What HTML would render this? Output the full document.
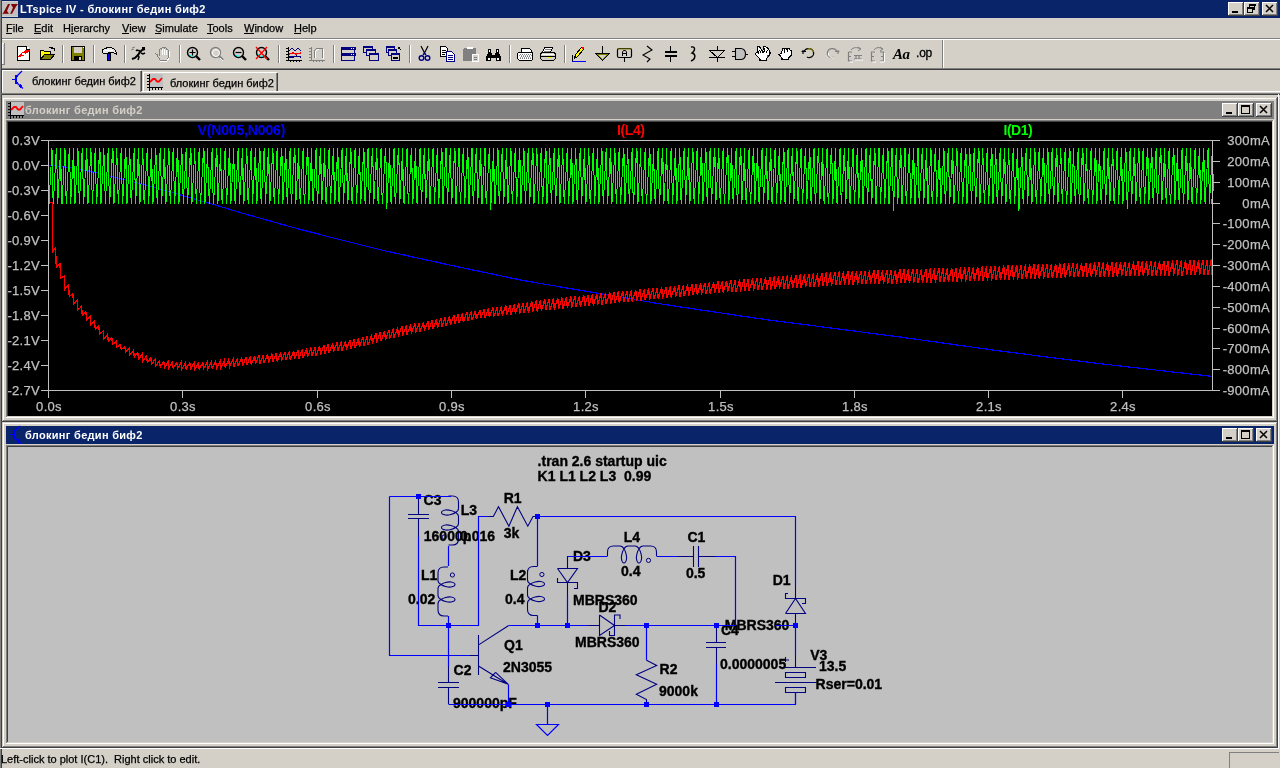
<!DOCTYPE html><html><head><meta charset="utf-8"><style>html,body{margin:0;padding:0;background:#d4d0c8;overflow:hidden}svg{display:block;will-change:transform}</style></head><body><svg style="white-space:pre" width="1280" height="768" viewBox="0 0 1280 768" font-family="Liberation Sans"><rect x="0" y="0" width="1280" height="768" fill="#d4d0c8"/>
<rect x="0" y="0" width="1" height="768" fill="#808080"/>
<rect x="1" y="0" width="1" height="768" fill="#404040"/>
<rect x="2" y="0" width="1278" height="18" fill="#0a246a"/>
<g transform="translate(2,1)"><rect width="16" height="16" fill="#c0c0c0"/><rect x="0" y="0" width="16" height="1" fill="#d4d0c8"/><rect x="0" y="15" width="16" height="1" fill="#d4d0c8"/><path d="M6,3 H8 L5,10 L7,12.8 H0 L1.5,11.5 Z" fill="#800000"/><path d="M9,3 H16 L14,5.5 L10,12.8 H8 L9.5,10 L11,6.5 L9.5,4.5 Z" fill="#800000"/></g>
<text x="20" y="13" font-family="Liberation Sans" font-size="11" fill="#fff" font-weight="bold" text-anchor="start" letter-spacing="0.33" >LTspice IV - блокинг бедин биф2</text>
<rect x="1228" y="2" width="16" height="14" fill="#404040"/>
<rect x="1228" y="2" width="15" height="13" fill="#ffffff"/>
<rect x="1229" y="3" width="14" height="12" fill="#808080"/>
<rect x="1229" y="3" width="13" height="11" fill="#d4d0c8"/>
<rect x="1244" y="2" width="16" height="14" fill="#404040"/>
<rect x="1244" y="2" width="15" height="13" fill="#ffffff"/>
<rect x="1245" y="3" width="14" height="12" fill="#808080"/>
<rect x="1245" y="3" width="13" height="11" fill="#d4d0c8"/>
<rect x="1262" y="2" width="16" height="14" fill="#404040"/>
<rect x="1262" y="2" width="15" height="13" fill="#ffffff"/>
<rect x="1263" y="3" width="14" height="12" fill="#808080"/>
<rect x="1263" y="3" width="13" height="11" fill="#d4d0c8"/>
<rect x="1232" y="11" width="6" height="2" fill="#000"/>
<rect x="1249.5" y="4.5" width="5" height="5" fill="none" stroke="#000"/>
<rect x="1249" y="4" width="7" height="2" fill="#000"/>
<rect x="1247" y="7" width="6" height="6" fill="#d4d0c8"/>
<rect x="1247.5" y="7.5" width="5" height="5" fill="none" stroke="#000"/>
<rect x="1247" y="7" width="7" height="2" fill="#000"/>
<path d="M1266,5 L1273,12 M1273,5 L1266,12" stroke="#000" stroke-width="1.5" fill="none"/>
<text x="6" y="32" font-family="Liberation Sans" font-size="11" fill="#000" text-anchor="start" stroke="#000" stroke-width="0.25">File</text>
<text x="34" y="32" font-family="Liberation Sans" font-size="11" fill="#000" text-anchor="start" stroke="#000" stroke-width="0.25">Edit</text>
<text x="63" y="32" font-family="Liberation Sans" font-size="11" fill="#000" text-anchor="start" stroke="#000" stroke-width="0.25">Hierarchy</text>
<text x="122" y="32" font-family="Liberation Sans" font-size="11" fill="#000" text-anchor="start" stroke="#000" stroke-width="0.25">View</text>
<text x="155" y="32" font-family="Liberation Sans" font-size="11" fill="#000" text-anchor="start" stroke="#000" stroke-width="0.25">Simulate</text>
<text x="207" y="32" font-family="Liberation Sans" font-size="11" fill="#000" text-anchor="start" stroke="#000" stroke-width="0.25">Tools</text>
<text x="244" y="32" font-family="Liberation Sans" font-size="11" fill="#000" text-anchor="start" stroke="#000" stroke-width="0.25">Window</text>
<text x="294" y="32" font-family="Liberation Sans" font-size="11" fill="#000" text-anchor="start" stroke="#000" stroke-width="0.25">Help</text>
<rect x="6" y="33" width="6" height="1" fill="#000"/>
<rect x="34" y="33" width="7" height="1" fill="#000"/>
<rect x="71" y="33" width="3" height="1" fill="#000"/>
<rect x="122" y="33" width="7" height="1" fill="#000"/>
<rect x="155" y="33" width="6" height="1" fill="#000"/>
<rect x="207" y="33" width="6" height="1" fill="#000"/>
<rect x="244" y="33" width="10" height="1" fill="#000"/>
<rect x="294" y="33" width="7" height="1" fill="#000"/>
<rect x="2" y="38" width="1278" height="1" fill="#808080"/>
<rect x="2" y="39" width="1278" height="1" fill="#ffffff"/>
<rect x="2" y="68" width="1278" height="1" fill="#808080"/>
<rect x="2" y="69" width="1278" height="1" fill="#404040"/>
<rect x="2" y="43" width="1" height="22" fill="#ffffff"/>
<rect x="2" y="43" width="3" height="1" fill="#ffffff"/>
<rect x="4" y="43" width="1" height="22" fill="#808080"/>
<rect x="2" y="64" width="3" height="1" fill="#808080"/>
<g transform="translate(16,46)" shape-rendering="crispEdges"><path d="M1.5,0.5 H10.5 L13.5,3.5 V14.5 H1.5 Z" fill="#fff" stroke="#000"/><path d="M10.5,0.5 V3.5 H13.5" fill="none" stroke="#000"/><rect x="11" y="1" width="2" height="2" fill="#fff"/><path d="M2,11 L5,7 L7,6 L9,4 L14,4 L11,7 L9,8 L7,10 Z" fill="#ff0000"/><rect x="6" y="7" width="3" height="2" fill="#fff"/></g>
<g transform="translate(39,46)" shape-rendering="crispEdges"><path d="M1.5,4.5 H4.5 L5.5,5.5 H11.5 V8.5 H5.5 L1.5,13.5 Z" fill="#ffff00" stroke="#000"/><path d="M1.5,13.5 L5.5,8.5 H15.5 L11.5,13.5 Z" fill="#808000" stroke="#000"/><path d="M9.5,2.5 C10.5,0.5 13,0.5 14,2.5" fill="none" stroke="#000"/><path d="M12,2 H15 V5" fill="none" stroke="#000"/></g>
<g transform="translate(70,46)" shape-rendering="crispEdges"><rect x="1.5" y="0.5" width="13" height="14" fill="#808000" stroke="#000"/><rect x="4" y="1" width="8" height="6" fill="#d4d0c8"/><rect x="4" y="10" width="8" height="4" fill="#000"/><rect x="9" y="11" width="2" height="3" fill="#d4d0c8"/><rect x="13" y="1" width="1" height="1" fill="#fff"/></g>
<g transform="translate(101,46)" shape-rendering="crispEdges"><path d="M1.5,3.5 L4.5,2.5 L6.5,1.5 H10.5 L13.5,3.5 L15.5,6.5 V8.5 L12.5,6.5 H8.5 L5.5,7.5 H2.5 L1.5,6.5 Z" fill="#e8e8e8" stroke="#000"/><rect x="4" y="4" width="8" height="1" fill="#fff"/><rect x="6.5" y="7.5" width="3" height="7" fill="#000080" stroke="#000"/><rect x="7" y="8" width="2" height="6" fill="#0000ff"/></g>
<g transform="translate(131,46)"><path d="M1,13 L4,12 L7,9 L9,6 L11,4 L14,3" stroke="#000" stroke-width="2" fill="none"/><path d="M7,9 L8,11 L7,14 M10,7 L12,8 L14,7 M9,5 L6,4 L5,5" stroke="#000" stroke-width="1.5" fill="none"/><rect x="11" y="1" width="3" height="3" fill="#000"/><path d="M1,2 L4,1 M0,4 L3,3" stroke="#808080" fill="none"/></g>
<g transform="translate(155,46)" shape-rendering="crispEdges"><path d="M3.5,9.5 L1.5,8.5 L3.5,11.5 L5.5,14.5 H11.5 L13.5,11.5 V4.5 L12.5,3.5 L11.5,4.5 V2.5 L10.5,1.5 L9.5,2.5 V1.5 H7.5 L6.5,2.5 V3.5 L5.5,2.5 L4.5,3.5 V9.5" fill="none" stroke="#808080"/><path d="M7,3 V9 M9,3 V9 M11,4 V9" stroke="#fff" fill="none"/><path d="M5,15 H12 L14,12 M14,5 V11" stroke="#fff" fill="none"/></g>
<g transform="translate(186,46)"><circle cx="6.5" cy="6.5" r="5" fill="none" stroke="#000" stroke-width="1.4"/><path d="M3,8 A4,4 0 0 0 8,10" fill="none" stroke="#00ffff" stroke-width="1"/><path d="M10,10 L14,14" stroke="#000" stroke-width="2.4"/><path d="M3.5,6.5 H9.5 M6.5,3.5 V9.5" stroke="#000" stroke-width="1.2"/></g>
<g transform="translate(209,46)"><circle cx="6.5" cy="6.5" r="5" fill="none" stroke="#808080" stroke-width="1.4"/><circle cx="7" cy="7" r="3.5" fill="none" stroke="#fff" stroke-width="1"/><path d="M10,10 L14,14" stroke="#808080" stroke-width="2.4"/><path d="M11,12 L14,15" stroke="#fff"/></g>
<g transform="translate(232,46)"><circle cx="6.5" cy="6.5" r="5" fill="none" stroke="#000" stroke-width="1.4"/><path d="M3,8 A4,4 0 0 0 8,10" fill="none" stroke="#00ffff" stroke-width="1"/><path d="M10,10 L14,14" stroke="#000" stroke-width="2.4"/><path d="M3.5,6.5 H9.5" stroke="#000" stroke-width="1.2"/></g>
<g transform="translate(255,46)"><circle cx="6.5" cy="6.5" r="5" fill="none" stroke="#000" stroke-width="1.4"/><path d="M3,8 A4,4 0 0 0 8,10" fill="none" stroke="#00ffff" stroke-width="1"/><path d="M10,10 L14,14" stroke="#000" stroke-width="2.4"/><path d="M1,1 L12,13 M12,1 L1,13" stroke="#ff0000" stroke-width="1.3"/></g>
<g transform="translate(286,46)" shape-rendering="crispEdges"><path d="M2.5,1 V14.5 H16" stroke="#000" fill="none"/><path d="M0,2.5H2M0,5.5H2M0,8.5H2M0,11.5H2M0,14.5H2M4.5,15V16M7.5,15V16M10.5,15V16M13.5,15V16" stroke="#000" fill="none"/><path d="M3,5 L6,2 L9,5 L12,2 L15,5" stroke="#000080" fill="none" stroke-width="1"/><path d="M3,8 L7,7 L10,8 L15,7" stroke="#ff0000" fill="none" stroke-width="1.3"/><path d="M3,11 L8,11 L10,10 L15,11" stroke="#000080" fill="none" stroke-width="1.3"/></g>
<g transform="translate(309,46)" shape-rendering="crispEdges"><path d="M2.5,1 V14.5 H16" stroke="#808080" fill="none"/><path d="M0,2.5H2M0,5.5H2M0,8.5H2M0,11.5H2M0,14.5H2M4.5,15V16M7.5,15V16M10.5,15V16M13.5,15V16" stroke="#808080" fill="none"/><path d="M5,12 V7 C5,4 7,2 10,2 H13 V12" stroke="#808080" fill="none"/><path d="M6,12 V8 C6,5 8,3 10,3 M14,3 V13" stroke="#fff" fill="none"/></g>
<g transform="translate(340,46)" shape-rendering="crispEdges"><rect x="1.5" y="1.5" width="13" height="13" fill="#d4d0c8" stroke="#000080"/><rect x="1" y="1" width="15" height="3" fill="#000080"/><rect x="1" y="7" width="15" height="3" fill="#000080"/><rect x="1.5" y="7.5" width="13" height="7" fill="none" stroke="#000080"/><rect x="11" y="2" width="1" height="1" fill="#fff"/><rect x="13" y="2" width="1" height="1" fill="#fff"/><rect x="11" y="8" width="1" height="1" fill="#fff"/><rect x="13" y="8" width="1" height="1" fill="#fff"/></g>
<g transform="translate(363,46)" shape-rendering="crispEdges"><rect x="0.5" y="0.5" width="9" height="6" fill="#d4d0c8" stroke="#000080"/><rect x="0" y="0" width="10" height="2" fill="#000080"/><rect x="3.5" y="3.5" width="9" height="6" fill="#d4d0c8" stroke="#000080"/><rect x="3" y="3" width="10" height="2" fill="#000080"/><rect x="6.5" y="7.5" width="9" height="7" fill="#d4d0c8" stroke="#000080"/><rect x="6" y="7" width="10" height="2" fill="#000080"/></g>
<g transform="translate(386,46)" shape-rendering="crispEdges"><rect x="0.5" y="0.5" width="8" height="6" fill="#d4d0c8" stroke="#000080"/><rect x="0" y="0" width="9" height="2" fill="#000080"/><rect x="2.5" y="3.5" width="8" height="6" fill="#d4d0c8" stroke="#000080"/><rect x="2" y="3" width="9" height="2" fill="#000080"/><rect x="5.5" y="7.5" width="8" height="7" fill="#d4d0c8" stroke="#000080"/><rect x="5" y="7" width="9" height="2" fill="#000080"/><rect x="7" y="11" width="5" height="2" fill="#000"/><path d="M12,1 L15,4 M12,1 H14 M12,1 V3" stroke="#000" fill="none"/></g>
<g transform="translate(417,46)"><path d="M4,0 L8,8 M11,0 L7,8" stroke="#000" fill="none" stroke-width="1.2"/><circle cx="4.5" cy="12" r="2.3" fill="none" stroke="#000080" stroke-width="1.4"/><circle cx="10.5" cy="12" r="2.3" fill="none" stroke="#000080" stroke-width="1.4"/><path d="M6,9 L7.5,7 L9,9" stroke="#000080" fill="none" stroke-width="1.3"/></g>
<g transform="translate(440,46)" shape-rendering="crispEdges"><path d="M0.5,0.5 H5.5 L7.5,2.5 V10.5 H0.5 Z" fill="#fff" stroke="#000"/><path d="M2,4.5 H6 M2,6.5 H6 M2,8.5 H5" stroke="#000"/><path d="M6.5,5.5 H11.5 L14.5,8.5 V15.5 H6.5 Z" fill="#fff" stroke="#000080"/><path d="M8,9.5 H13 M8,11.5 H13 M8,13.5 H13" stroke="#000080"/></g>
<g transform="translate(463,46)" shape-rendering="crispEdges"><rect x="0" y="2" width="13" height="13" rx="2" fill="#808080"/><rect x="4" y="1" width="6" height="2" fill="#fff"/><path d="M9.5,8.5 H15.5 V15.5 H9.5 Z" fill="#d4d0c8" stroke="#fff"/><path d="M11,11.5 H14 M11,13.5 H14" stroke="#808080"/></g>
<g transform="translate(486,46)" shape-rendering="crispEdges"><path d="M2,3 H5 V7 H6 V9 H9 V7 H10 V3 H13 V7 L15,11 V15 H10 V12 H5 V15 H0 V11 L2,7 Z" fill="#000"/><rect x="2" y="12" width="2" height="2" fill="#fff"/><rect x="11" y="12" width="2" height="2" fill="#fff"/><rect x="3" y="4" width="1" height="2" fill="#fff"/><rect x="11" y="4" width="1" height="2" fill="#fff"/></g>
<g transform="translate(517,46)" shape-rendering="crispEdges"><path d="M4.5,2.5 H12.5 L14.5,4.5 V6.5 H4.5 Z" fill="#fff" stroke="#000"/><path d="M1.5,6.5 H15.5 V13.5 L14.5,14.5 H2.5 L0.5,12.5 V7.5 Z" fill="#fff" stroke="#000"/><path d="M3,8h1M5,8h1M7,8h1M9,8h1M11,8h1M13,8h1M4,10h1M6,10h1M8,10h1M10,10h1M12,10h1M3,12h1M5,12h1M7,12h1M9,12h1M11,12h1M13,12h1" stroke="#808080"/><path d="M2,9h1M4,9h1M6,9h1M8,9h1M10,9h1M12,9h1M14,9h1M3,11h1M5,11h1M7,11h1M9,11h1M11,11h1M13,11h1" stroke="#a0a0a0"/></g>
<g transform="translate(540,46)" shape-rendering="crispEdges"><path d="M4.5,1.5 H12.5 L10.5,6.5 H2.5 Z" fill="#fff" stroke="#000"/><path d="M5,3.5 H11 M4,5 H10" stroke="#808080"/><path d="M1.5,6.5 H14.5 L15.5,8.5 V12.5 L13.5,14.5 H2.5 L0.5,12.5 V8.5 Z" fill="#d4d0c8" stroke="#000"/><path d="M1,10.5 H15" stroke="#000"/><path d="M8,11.5 H11" stroke="#ffff00"/><path d="M2,8 H14" stroke="#fff"/></g>
<g transform="translate(571,46)" shape-rendering="crispEdges"><path d="M3.5,12.5 L4.5,8.5 L10.5,1.5 L12.5,3.5 L6.5,10.5 Z" fill="#ffff00" stroke="#000"/><rect x="11" y="1" width="2" height="2" fill="#ff0000"/><path d="M1,15.5 H15" stroke="#0000ff"/><path d="M1.5,9 V15" stroke="#000"/></g>
<g transform="translate(594,46)" shape-rendering="crispEdges"><path d="M8.5,0 V7" stroke="#000"/><path d="M1.5,7.5 H15.5 L8.5,14.5 Z" fill="#808000" stroke="#000"/><path d="M3.5,8.5 H13.5 L8.5,13 Z" fill="#d4d0c8"/></g>
<g transform="translate(617,46)"><rect x="0.5" y="2.5" width="14" height="9" rx="1.5" fill="#d4d0c8" stroke="#000" stroke-width="1.2"/><path d="M1,3 H14" stroke="#808000"/><path d="M7.5,11 V16" stroke="#000"/><path d="M5.5,10 V6 L6.5,4.5 H8.5 L9.5,6 V10 M5.5,7.5 H9.5" stroke="#000" fill="none"/></g>
<g transform="translate(640,46)"><path d="M7,0 L12,4 L3,9 L10,13 L7,16" stroke="#000" fill="none" stroke-width="1.1"/></g>
<g transform="translate(663,46)" shape-rendering="crispEdges"><path d="M7.5,0 V6 M7.5,9 V16" stroke="#000" stroke-width="1.3"/><rect x="2" y="5" width="12" height="2" fill="#000"/><rect x="2" y="9" width="12" height="2" fill="#000"/></g>
<g transform="translate(689,46)"><path d="M2,1 C6,0 7,4 3,7 C7,8 7,13 2,15" stroke="#000" fill="none" stroke-width="1.4"/></g>
<g transform="translate(709,46)" shape-rendering="crispEdges"><path d="M8.5,0 V16" stroke="#000"/><path d="M0.5,4.5 H15.5 L8.5,11.5 Z" fill="#d4d0c8" stroke="#000"/><path d="M0,11.5 H16" stroke="#000"/></g>
<g transform="translate(732,46)"><path d="M3.5,2.5 H8.5 C12,2.5 13.5,5 13.5,8 C13.5,11 12,13.5 8.5,13.5 H3.5 Z" fill="#c0c0c0" stroke="#000" stroke-width="1.1"/><path d="M0,5.5 H3 M0,10.5 H3 M14,8.5 H16" stroke="#000"/></g>
<g transform="translate(755,46)" shape-rendering="crispEdges"><path d="M0.5,7.5 L2,6.5 L3.5,7 L2,2 L3,0.5 H4.5 L7.5,5.5 L9,0.5 H10.5 L13.5,3 L15,6.5 V8 L11.5,12.5 V14.5 H5 V13 L0.5,8.5 Z" fill="#fff" stroke="#000" stroke-width="1.1"/><path d="M4.5,4 L6,6.5 M10,2.5 L8.5,7 M12.5,4 L11,7" stroke="#000" fill="none"/><rect x="12" y="9" width="1" height="2" fill="#008080"/></g>
<g transform="translate(778,46)" shape-rendering="crispEdges"><path d="M1,8.5 L3,7.5 L4,5 L5,2.5 H7.5 L8.5,3 L9.5,2.5 H11 L12,4 L13.5,4.5 V9 L10.5,12 V13.5 H4 V12 Z" fill="#fff" stroke="#000" stroke-width="1.1"/><path d="M6.5,3 V7 M9.5,3 V6" stroke="#000" fill="none"/></g>
<g transform="translate(801,46)"><path d="M3,6 C4,2 11,1 12.5,6 C13.5,10 9,13 6,11" stroke="#000" fill="none" stroke-width="1.2" /><path d="M7,3 C10,2 12,4 12.5,6" stroke="#808000" fill="none" stroke-width="1.2"/><path d="M0.5,5.5 H5 M2,4 V8" stroke="#000" stroke-width="1.2"/></g>
<g transform="translate(824,46)"><path d="M13,6 C12,2 5,1 3.5,6 C2.5,10 7,13 10,11" stroke="#808080" fill="none" stroke-width="1.2" /><path d="M4.5,7 C4,10 7,12 10,12" stroke="#fff" fill="none"/><path d="M11,5.5 H15.5 M14,4 V8" stroke="#808080" stroke-width="1.2"/></g>
<g transform="translate(847,46)"><path d="M1.5,6 V15 H5 M1.5,10.5 H4 M1.5,6 H5" stroke="#808080" fill="none" stroke-width="1.2"/><path d="M7,9.5 H15 M9,9.5 V13 M12,9.5 V13 M7,13 H15" stroke="#808080" fill="none" stroke-width="1.2"/><path d="M4,4 C6,1 11,1 13,3 M11,1 L14,3 L11,5" stroke="#808080" fill="none"/><path d="M2.5,16 H6 M8,14 H16" stroke="#fff"/></g>
<g transform="translate(870,46)"><path d="M5,6 H1.5 V15 H5 M1.5,10.5 H4" stroke="#808080" fill="none" stroke-width="1.2"/><path d="M10,6 H13.5 V15 H10 M13.5,10.5 H11" stroke="#808080" fill="none" stroke-width="1.2"/><path d="M4,4 C6,1 10,1 12,3 M10,1 L13,3 L10,5" stroke="#808080" fill="none"/><path d="M2.5,16 H6 M10,16 H14 M14.5,7 V16" stroke="#fff"/></g>
<g transform="translate(893,46)"><text x="0" y="13" font-family="Liberation Serif" font-style="italic" font-weight="bold" font-size="15" fill="#000" letter-spacing="-0.5">Aa</text></g>
<g transform="translate(916,46)"><text x="0" y="11" font-family="Liberation Sans" font-size="12" fill="#000" stroke="#000" stroke-width="0.3" letter-spacing="-0.2">.op</text></g>
<rect x="62" y="45" width="1" height="18" fill="#808080"/><rect x="63" y="45" width="1" height="18" fill="#fff"/>
<rect x="93" y="45" width="1" height="18" fill="#808080"/><rect x="94" y="45" width="1" height="18" fill="#fff"/>
<rect x="124" y="45" width="1" height="18" fill="#808080"/><rect x="125" y="45" width="1" height="18" fill="#fff"/>
<rect x="179" y="45" width="1" height="18" fill="#808080"/><rect x="180" y="45" width="1" height="18" fill="#fff"/>
<rect x="278" y="45" width="1" height="18" fill="#808080"/><rect x="279" y="45" width="1" height="18" fill="#fff"/>
<rect x="333" y="45" width="1" height="18" fill="#808080"/><rect x="334" y="45" width="1" height="18" fill="#fff"/>
<rect x="409" y="45" width="1" height="18" fill="#808080"/><rect x="410" y="45" width="1" height="18" fill="#fff"/>
<rect x="509" y="45" width="1" height="18" fill="#808080"/><rect x="510" y="45" width="1" height="18" fill="#fff"/>
<rect x="564" y="45" width="1" height="18" fill="#808080"/><rect x="565" y="45" width="1" height="18" fill="#fff"/>
<rect x="942" y="40" width="1" height="28" fill="#808080"/>
<rect x="943" y="40" width="1" height="28" fill="#ffffff"/>
<rect x="142" y="91" width="1138" height="1" fill="#ffffff"/>
<rect x="2" y="70" width="139" height="1" fill="#ffffff"/>
<rect x="2" y="70" width="1" height="22" fill="#ffffff"/>
<rect x="140" y="71" width="1" height="21" fill="#808080"/>
<rect x="141" y="71" width="1" height="20" fill="#404040"/>
<g transform="translate(6,70)" shape-rendering="crispEdges"><rect x="6" y="9" width="3" height="1" fill="#0000ff"/><rect x="9" y="5" width="2" height="9" fill="#0000ff"/><rect x="11" y="5" width="1" height="2" fill="#0000ff"/><rect x="11" y="12" width="1" height="2" fill="#0000ff"/><path d="M11,6 L16,1" stroke="#0000ff" fill="none" shape-rendering="auto" stroke-width="1.2"/><path d="M11,13 L17,18.5" stroke="#0000ff" fill="none" shape-rendering="auto" stroke-width="1.2"/><rect x="13" y="15" width="3" height="2" fill="#0000ff"/><rect x="14" y="14" width="1" height="4" fill="#0000ff"/></g>
<text x="32" y="84.5" font-family="Liberation Sans" font-size="11" fill="#000" text-anchor="start" stroke="#000" stroke-width="0.25">блокинг бедин биф2</text>
<rect x="143" y="72" width="134" height="1" fill="#ffffff"/>
<rect x="143" y="72" width="1" height="19" fill="#ffffff"/>
<rect x="276" y="73" width="1" height="18" fill="#808080"/>
<rect x="277" y="73" width="1" height="18" fill="#404040"/>
<g transform="translate(147,74)" shape-rendering="crispEdges"><rect x="3" y="0" width="13" height="13" fill="#c0c0c0"/><path d="M2.5,0 V16.5" stroke="#000" fill="none"/><path d="M0,1.5h3M0,4.5h3M0,7.5h3M0,10.5h3M0,13.5h16" stroke="#000" fill="none"/><path d="M5.5,14v2M8.5,14v2M11.5,14v2M14.5,14v2" stroke="#000" fill="none"/><path d="M3,8 L6,5 H8 L10,7.5 H12 L15,4" stroke="#f00" stroke-width="1.8" fill="none" shape-rendering="auto"/></g>
<text x="170" y="86.5" font-family="Liberation Sans" font-size="11" fill="#000" text-anchor="start" stroke="#000" stroke-width="0.25">блокинг бедин биф2</text>
<rect x="0" y="93" width="1280" height="1" fill="#808080"/>
<rect x="1" y="94" width="1279" height="1" fill="#404040"/>
<rect x="1278" y="94" width="1" height="654" fill="#ffffff"/>
<rect x="0" y="748" width="1279" height="1" fill="#ffffff"/>
<text x="1" y="763" font-family="Liberation Sans" font-size="11" fill="#000" text-anchor="start" stroke="#000" stroke-width="0.25">Left-click to plot I(C1). &#160;Right click to edit.</text>
<rect x="1229" y="752" width="50" height="1" fill="#808080"/>
<rect x="1229" y="752" width="1" height="16" fill="#808080"/>
<rect x="2" y="97" width="1276" height="325" fill="#404040"/>
<rect x="2" y="97" width="1275" height="324" fill="#d4d0c8"/>
<rect x="3" y="98" width="1274" height="323" fill="#808080"/>
<rect x="3" y="98" width="1273" height="322" fill="#ffffff"/>
<rect x="4" y="99" width="1272" height="321" fill="#d4d0c8"/>
<rect x="6" y="101" width="1268" height="18" fill="#808080"/>
<g transform="translate(8,102)" shape-rendering="crispEdges"><rect x="3" y="0" width="13" height="13" fill="#c0c0c0"/><path d="M2.5,0 V16.5" stroke="#000" fill="none"/><path d="M0,1.5h3M0,4.5h3M0,7.5h3M0,10.5h3M0,13.5h16" stroke="#000" fill="none"/><path d="M5.5,14v2M8.5,14v2M11.5,14v2M14.5,14v2" stroke="#000" fill="none"/><path d="M3,8 L6,5 H8 L10,7.5 H12 L15,4" stroke="#f00" stroke-width="1.8" fill="none" shape-rendering="auto"/></g>
<text x="25" y="114" font-family="Liberation Sans" font-size="11" fill="#d4d0c8" font-weight="bold" text-anchor="start" letter-spacing="0.3" >блокинг бедин биф2</text>
<rect x="1222" y="103" width="16" height="14" fill="#404040"/>
<rect x="1222" y="103" width="15" height="13" fill="#ffffff"/>
<rect x="1223" y="104" width="14" height="12" fill="#808080"/>
<rect x="1223" y="104" width="13" height="11" fill="#d4d0c8"/>
<rect x="1238" y="103" width="16" height="14" fill="#404040"/>
<rect x="1238" y="103" width="15" height="13" fill="#ffffff"/>
<rect x="1239" y="104" width="14" height="12" fill="#808080"/>
<rect x="1239" y="104" width="13" height="11" fill="#d4d0c8"/>
<rect x="1256" y="103" width="16" height="14" fill="#404040"/>
<rect x="1256" y="103" width="15" height="13" fill="#ffffff"/>
<rect x="1257" y="104" width="14" height="12" fill="#808080"/>
<rect x="1257" y="104" width="13" height="11" fill="#d4d0c8"/>
<rect x="1226" y="112" width="6" height="2" fill="#000"/>
<rect x="1241.5" y="105.5" width="8" height="8" fill="none" stroke="#000"/>
<rect x="1241" y="105" width="9" height="2" fill="#000"/>
<path d="M1260,106 L1267,113 M1267,106 L1260,113" stroke="#000" stroke-width="1.5" fill="none"/>
<rect x="6" y="120" width="1268" height="298" fill="#ffffff"/>
<rect x="6" y="120" width="1267" height="297" fill="#808080"/>
<rect x="7" y="121" width="1266" height="296" fill="#d4d0c8"/>
<rect x="7" y="121" width="1265" height="295" fill="#404040"/>
<rect x="8" y="122" width="1264" height="294" fill="#000"/>
<g shape-rendering="crispEdges">
<path d="M48,165.0 L49,165.2 L50,165.3 L51,165.5 L52,165.6 L53,165.8 L54,165.8 L55,165.9 L56,166.0 L57,166.1 L58,166.3 L59,166.4 L60,166.5 L61,166.7 L62,166.8 L63,166.9 L64,167.0 L65,167.2 L66,167.3 L67,167.4 L68,167.5 L69,167.7 L70,167.8 L71,167.9 L72,168.1 L73,168.2 L74,168.3 L75,168.5 L76,168.6 L77,168.8 L78,169.0 L79,169.1 L80,169.3 L81,169.5 L82,169.7 L83,169.9 L84,170.1 L85,170.3 L86,170.5 L87,170.8 L88,171.0 L89,171.2 L90,171.4 L91,171.6 L92,171.8 L93,172.0 L94,172.2 L95,172.4 L96,172.7 L97,172.9 L98,173.1 L99,173.3 L100,173.6 L101,173.8 L102,174.0 L103,174.3 L104,174.5 L105,174.8 L106,175.0 L107,175.3 L108,175.5 L109,175.8 L110,176.1 L111,176.3 L112,176.6 L113,176.8 L114,177.1 L115,177.3 L116,177.6 L117,177.8 L118,178.1 L119,178.3 L120,178.6 L121,178.9 L122,179.1 L123,179.4 L124,179.6 L125,179.9 L126,180.1 L127,180.4 L128,180.6 L129,180.9 L130,181.2 L131,181.4 L132,181.7 L133,181.9 L134,182.2 L135,182.4 L136,182.7 L137,182.9 L138,183.2 L139,183.4 L140,183.7 L141,184.0 L142,184.2 L143,184.5 L144,184.7 L145,185.0 L146,185.2 L147,185.5 L148,185.8 L149,186.0 L150,186.3 L151,186.6 L152,186.9 L153,187.1 L154,187.4 L155,187.7 L156,188.0 L157,188.3 L158,188.6 L159,188.9 L160,189.1 L161,189.4 L162,189.7 L163,190.0 L164,190.3 L165,190.6 L166,190.9 L167,191.1 L168,191.4 L169,191.7 L170,192.0 L171,192.3 L172,192.6 L173,192.9 L174,193.1 L175,193.4 L176,193.7 L177,194.0 L178,194.3 L179,194.6 L180,194.9 L181,195.1 L182,195.4 L183,195.7 L184,196.0 L185,196.3 L186,196.6 L187,196.9 L188,197.1 L189,197.4 L190,197.7 L191,198.0 L192,198.3 L193,198.6 L194,198.9 L195,199.1 L196,199.4 L197,199.7 L198,200.0 L199,200.3 L200,200.6 L201,200.9 L202,201.1 L203,201.4 L204,201.7 L205,202.0 L206,202.3 L207,202.6 L208,202.9 L209,203.1 L210,203.4 L211,203.7 L212,204.0 L213,204.3 L214,204.6 L215,204.9 L216,205.2 L217,205.5 L218,205.8 L219,206.1 L220,206.4 L221,206.7 L222,207.0 L223,207.3 L224,207.6 L225,207.9 L226,208.3 L227,208.6 L228,208.9 L229,209.2 L230,209.5 L231,209.8 L232,210.1 L233,210.4 L234,210.7 L235,211.0 L236,211.3 L237,211.6 L238,211.9 L239,212.2 L240,212.5 L241,212.8 L242,213.1 L243,213.3 L244,213.6 L245,213.9 L246,214.2 L247,214.5 L248,214.8 L249,215.0 L250,215.3 L251,215.6 L252,215.9 L253,216.2 L254,216.4 L255,216.7 L256,217.0 L257,217.3 L258,217.6 L259,217.9 L260,218.1 L261,218.4 L262,218.7 L263,219.0 L264,219.3 L265,219.5 L266,219.8 L267,220.1 L268,220.4 L269,220.7 L270,220.9 L271,221.2 L272,221.5 L273,221.8 L274,222.1 L275,222.4 L276,222.6 L277,222.9 L278,223.2 L279,223.5 L280,223.8 L281,224.0 L282,224.3 L283,224.6 L284,224.9 L285,225.2 L286,225.5 L287,225.7 L288,226.0 L289,226.3 L290,226.6 L291,226.9 L292,227.1 L293,227.4 L294,227.7 L295,228.0 L296,228.3 L297,228.5 L298,228.8 L299,229.1 L300,229.4 L301,229.6 L302,229.9 L303,230.2 L304,230.4 L305,230.7 L306,230.9 L307,231.2 L308,231.4 L309,231.7 L310,231.9 L311,232.2 L312,232.5 L313,232.7 L314,233.0 L315,233.2 L316,233.5 L317,233.7 L318,234.0 L319,234.2 L320,234.5 L321,234.7 L322,235.0 L323,235.3 L324,235.5 L325,235.8 L326,236.0 L327,236.3 L328,236.5 L329,236.8 L330,237.0 L331,237.3 L332,237.5 L333,237.8 L334,238.0 L335,238.3 L336,238.6 L337,238.8 L338,239.1 L339,239.3 L340,239.6 L341,239.8 L342,240.1 L343,240.3 L344,240.6 L345,240.8 L346,241.1 L347,241.4 L348,241.6 L349,241.9 L350,242.1 L351,242.4 L352,242.6 L353,242.9 L354,243.1 L355,243.4 L356,243.6 L357,243.9 L358,244.2 L359,244.4 L360,244.7 L361,244.9 L362,245.2 L363,245.4 L364,245.7 L365,245.9 L366,246.2 L367,246.4 L368,246.7 L369,247.0 L370,247.2 L371,247.5 L372,247.7 L373,248.0 L374,248.2 L375,248.5 L376,248.7 L377,249.0 L378,249.2 L379,249.5 L380,249.7 L381,249.9 L382,250.2 L383,250.4 L384,250.6 L385,250.8 L386,251.1 L387,251.3 L388,251.5 L389,251.7 L390,251.9 L391,252.2 L392,252.4 L393,252.6 L394,252.8 L395,253.0 L396,253.2 L397,253.5 L398,253.7 L399,253.9 L400,254.1 L401,254.3 L402,254.6 L403,254.8 L404,255.0 L405,255.2 L406,255.4 L407,255.7 L408,255.9 L409,256.1 L410,256.3 L411,256.5 L412,256.8 L413,257.0 L414,257.2 L415,257.4 L416,257.6 L417,257.8 L418,258.1 L419,258.3 L420,258.5 L421,258.7 L422,258.9 L423,259.2 L424,259.4 L425,259.6 L426,259.8 L427,260.0 L428,260.3 L429,260.5 L430,260.7 L431,260.9 L432,261.1 L433,261.3 L434,261.6 L435,261.8 L436,262.0 L437,262.2 L438,262.4 L439,262.7 L440,262.9 L441,263.1 L442,263.3 L443,263.5 L444,263.8 L445,264.0 L446,264.2 L447,264.4 L448,264.6 L449,264.8 L450,265.1 L451,265.3 L452,265.5 L453,265.7 L454,265.9 L455,266.2 L456,266.4 L457,266.6 L458,266.8 L459,267.0 L460,267.2 L461,267.5 L462,267.7 L463,267.9 L464,268.1 L465,268.3 L466,268.5 L467,268.7 L468,268.9 L469,269.1 L470,269.4 L471,269.6 L472,269.8 L473,270.0 L474,270.2 L475,270.4 L476,270.6 L477,270.8 L478,271.0 L479,271.2 L480,271.5 L481,271.7 L482,271.9 L483,272.1 L484,272.3 L485,272.5 L486,272.7 L487,272.9 L488,273.1 L489,273.3 L490,273.6 L491,273.8 L492,274.0 L493,274.2 L494,274.4 L495,274.6 L496,274.8 L497,275.0 L498,275.2 L499,275.5 L500,275.7 L501,275.9 L502,276.1 L503,276.3 L504,276.5 L505,276.7 L506,276.9 L507,277.1 L508,277.3 L509,277.6 L510,277.8 L511,278.0 L512,278.2 L513,278.4 L514,278.6 L515,278.8 L516,279.0 L517,279.2 L518,279.4 L519,279.7 L520,279.9 L521,280.1 L522,280.3 L523,280.4 L524,280.6 L525,280.8 L526,281.0 L527,281.2 L528,281.4 L529,281.5 L530,281.7 L531,281.9 L532,282.0 L533,282.2 L534,282.4 L535,282.5 L536,282.7 L537,282.9 L538,283.1 L539,283.2 L540,283.4 L541,283.6 L542,283.7 L543,283.9 L544,284.1 L545,284.2 L546,284.4 L547,284.6 L548,284.8 L549,284.9 L550,285.1 L551,285.3 L552,285.4 L553,285.6 L554,285.8 L555,285.9 L556,286.1 L557,286.3 L558,286.5 L559,286.6 L560,286.8 L561,287.0 L562,287.1 L563,287.3 L564,287.5 L565,287.6 L566,287.8 L567,288.0 L568,288.2 L569,288.3 L570,288.5 L571,288.7 L572,288.8 L573,289.0 L574,289.2 L575,289.3 L576,289.5 L577,289.7 L578,289.9 L579,290.0 L580,290.2 L581,290.4 L582,290.5 L583,290.7 L584,290.9 L585,291.0 L586,291.2 L587,291.4 L588,291.6 L589,291.7 L590,291.9 L591,292.1 L592,292.2 L593,292.4 L594,292.6 L595,292.7 L596,292.9 L597,293.1 L598,293.3 L599,293.4 L600,293.6 L601,293.8 L602,293.9 L603,294.1 L604,294.3 L605,294.5 L606,294.6 L607,294.8 L608,295.0 L609,295.1 L610,295.3 L611,295.5 L612,295.6 L613,295.8 L614,296.0 L615,296.2 L616,296.3 L617,296.5 L618,296.7 L619,296.8 L620,297.0 L621,297.2 L622,297.3 L623,297.5 L624,297.7 L625,297.9 L626,298.0 L627,298.2 L628,298.4 L629,298.5 L630,298.7 L631,298.9 L632,299.0 L633,299.2 L634,299.4 L635,299.6 L636,299.7 L637,299.9 L638,300.1 L639,300.2 L640,300.4 L641,300.6 L642,300.7 L643,300.9 L644,301.1 L645,301.2 L646,301.4 L647,301.6 L648,301.8 L649,301.9 L650,302.1 L651,302.3 L652,302.4 L653,302.6 L654,302.8 L655,303.0 L656,303.1 L657,303.3 L658,303.4 L659,303.6 L660,303.8 L661,303.9 L662,304.1 L663,304.2 L664,304.4 L665,304.6 L666,304.7 L667,304.9 L668,305.0 L669,305.2 L670,305.3 L671,305.4 L672,305.6 L673,305.8 L674,305.9 L675,306.1 L676,306.2 L677,306.4 L678,306.5 L679,306.7 L680,306.8 L681,307.0 L682,307.1 L683,307.2 L684,307.4 L685,307.6 L686,307.7 L687,307.9 L688,308.0 L689,308.2 L690,308.3 L691,308.5 L692,308.6 L693,308.8 L694,308.9 L695,309.1 L696,309.2 L697,309.4 L698,309.5 L699,309.7 L700,309.8 L701,310.0 L702,310.1 L703,310.2 L704,310.4 L705,310.6 L706,310.7 L707,310.8 L708,311.0 L709,311.2 L710,311.3 L711,311.5 L712,311.6 L713,311.8 L714,311.9 L715,312.1 L716,312.2 L717,312.4 L718,312.5 L719,312.7 L720,312.8 L721,312.9 L722,313.1 L723,313.3 L724,313.4 L725,313.6 L726,313.7 L727,313.9 L728,314.0 L729,314.2 L730,314.3 L731,314.4 L732,314.6 L733,314.8 L734,314.9 L735,315.1 L736,315.2 L737,315.4 L738,315.5 L739,315.6 L740,315.8 L741,316.0 L742,316.1 L743,316.3 L744,316.4 L745,316.6 L746,316.7 L747,316.9 L748,317.0 L749,317.1 L750,317.3 L751,317.4 L752,317.6 L753,317.8 L754,317.9 L755,318.1 L756,318.2 L757,318.3 L758,318.5 L759,318.6 L760,318.8 L761,318.9 L762,319.0 L763,319.2 L764,319.3 L765,319.4 L766,319.6 L767,319.7 L768,319.8 L769,320.0 L770,320.1 L771,320.2 L772,320.4 L773,320.5 L774,320.6 L775,320.8 L776,320.9 L777,321.0 L778,321.1 L779,321.3 L780,321.4 L781,321.5 L782,321.7 L783,321.8 L784,321.9 L785,322.1 L786,322.2 L787,322.3 L788,322.4 L789,322.6 L790,322.7 L791,322.8 L792,323.0 L793,323.1 L794,323.2 L795,323.4 L796,323.5 L797,323.6 L798,323.7 L799,323.9 L800,324.0 L801,324.1 L802,324.3 L803,324.4 L804,324.5 L805,324.6 L806,324.8 L807,324.9 L808,325.0 L809,325.2 L810,325.3 L811,325.4 L812,325.6 L813,325.7 L814,325.8 L815,325.9 L816,326.1 L817,326.2 L818,326.3 L819,326.5 L820,326.6 L821,326.7 L822,326.9 L823,327.0 L824,327.1 L825,327.3 L826,327.4 L827,327.5 L828,327.6 L829,327.8 L830,327.9 L831,328.0 L832,328.2 L833,328.3 L834,328.4 L835,328.6 L836,328.7 L837,328.8 L838,328.9 L839,329.1 L840,329.2 L841,329.3 L842,329.5 L843,329.6 L844,329.7 L845,329.9 L846,330.0 L847,330.1 L848,330.2 L849,330.4 L850,330.5 L851,330.6 L852,330.8 L853,330.9 L854,331.0 L855,331.2 L856,331.3 L857,331.4 L858,331.5 L859,331.7 L860,331.8 L861,331.9 L862,332.1 L863,332.2 L864,332.3 L865,332.4 L866,332.6 L867,332.7 L868,332.8 L869,333.0 L870,333.1 L871,333.2 L872,333.4 L873,333.5 L874,333.6 L875,333.8 L876,333.9 L877,334.0 L878,334.1 L879,334.3 L880,334.4 L881,334.5 L882,334.7 L883,334.8 L884,334.9 L885,335.1 L886,335.2 L887,335.3 L888,335.4 L889,335.6 L890,335.7 L891,335.8 L892,336.0 L893,336.1 L894,336.2 L895,336.4 L896,336.5 L897,336.6 L898,336.7 L899,336.9 L900,337.0 L901,337.1 L902,337.3 L903,337.4 L904,337.6 L905,337.7 L906,337.8 L907,338.0 L908,338.1 L909,338.3 L910,338.4 L911,338.5 L912,338.7 L913,338.8 L914,339.0 L915,339.1 L916,339.2 L917,339.4 L918,339.5 L919,339.7 L920,339.8 L921,339.9 L922,340.1 L923,340.2 L924,340.4 L925,340.5 L926,340.6 L927,340.8 L928,340.9 L929,341.1 L930,341.2 L931,341.3 L932,341.5 L933,341.6 L934,341.8 L935,341.9 L936,342.0 L937,342.2 L938,342.3 L939,342.5 L940,342.6 L941,342.7 L942,342.9 L943,343.0 L944,343.2 L945,343.3 L946,343.4 L947,343.6 L948,343.7 L949,343.9 L950,344.0 L951,344.1 L952,344.3 L953,344.4 L954,344.6 L955,344.7 L956,344.8 L957,345.0 L958,345.1 L959,345.3 L960,345.4 L961,345.5 L962,345.7 L963,345.8 L964,346.0 L965,346.1 L966,346.2 L967,346.4 L968,346.5 L969,346.7 L970,346.8 L971,346.9 L972,347.1 L973,347.2 L974,347.4 L975,347.5 L976,347.6 L977,347.8 L978,347.9 L979,348.1 L980,348.2 L981,348.3 L982,348.5 L983,348.6 L984,348.8 L985,348.9 L986,349.0 L987,349.2 L988,349.3 L989,349.5 L990,349.6 L991,349.7 L992,349.9 L993,350.0 L994,350.2 L995,350.3 L996,350.4 L997,350.6 L998,350.7 L999,350.8 L1000,351.0 L1001,351.1 L1002,351.2 L1003,351.4 L1004,351.5 L1005,351.6 L1006,351.8 L1007,351.9 L1008,352.0 L1009,352.1 L1010,352.3 L1011,352.4 L1012,352.5 L1013,352.7 L1014,352.8 L1015,352.9 L1016,353.0 L1017,353.2 L1018,353.3 L1019,353.4 L1020,353.5 L1021,353.7 L1022,353.8 L1023,353.9 L1024,354.0 L1025,354.2 L1026,354.3 L1027,354.4 L1028,354.6 L1029,354.7 L1030,354.8 L1031,354.9 L1032,355.1 L1033,355.2 L1034,355.3 L1035,355.4 L1036,355.6 L1037,355.7 L1038,355.8 L1039,356.0 L1040,356.1 L1041,356.2 L1042,356.3 L1043,356.5 L1044,356.6 L1045,356.7 L1046,356.8 L1047,357.0 L1048,357.1 L1049,357.2 L1050,357.4 L1051,357.5 L1052,357.6 L1053,357.7 L1054,357.9 L1055,358.0 L1056,358.1 L1057,358.2 L1058,358.4 L1059,358.5 L1060,358.6 L1061,358.7 L1062,358.9 L1063,359.0 L1064,359.1 L1065,359.3 L1066,359.4 L1067,359.5 L1068,359.6 L1069,359.8 L1070,359.9 L1071,360.0 L1072,360.1 L1073,360.3 L1074,360.4 L1075,360.5 L1076,360.7 L1077,360.8 L1078,360.9 L1079,361.0 L1080,361.2 L1081,361.3 L1082,361.4 L1083,361.5 L1084,361.7 L1085,361.8 L1086,361.9 L1087,362.0 L1088,362.2 L1089,362.3 L1090,362.4 L1091,362.6 L1092,362.7 L1093,362.8 L1094,362.9 L1095,363.1 L1096,363.2 L1097,363.3 L1098,363.4 L1099,363.6 L1100,363.7 L1101,363.8 L1102,363.9 L1103,364.0 L1104,364.2 L1105,364.3 L1106,364.4 L1107,364.5 L1108,364.6 L1109,364.7 L1110,364.8 L1111,364.9 L1112,365.1 L1113,365.2 L1114,365.3 L1115,365.4 L1116,365.5 L1117,365.6 L1118,365.7 L1119,365.9 L1120,366.0 L1121,366.1 L1122,366.2 L1123,366.3 L1124,366.4 L1125,366.5 L1126,366.6 L1127,366.8 L1128,366.9 L1129,367.0 L1130,367.1 L1131,367.2 L1132,367.3 L1133,367.4 L1134,367.6 L1135,367.7 L1136,367.8 L1137,367.9 L1138,368.0 L1139,368.1 L1140,368.2 L1141,368.3 L1142,368.5 L1143,368.6 L1144,368.7 L1145,368.8 L1146,368.9 L1147,369.0 L1148,369.1 L1149,369.3 L1150,369.4 L1151,369.5 L1152,369.6 L1153,369.7 L1154,369.8 L1155,369.9 L1156,370.1 L1157,370.2 L1158,370.3 L1159,370.4 L1160,370.5 L1161,370.6 L1162,370.7 L1163,370.8 L1164,371.0 L1165,371.1 L1166,371.2 L1167,371.3 L1168,371.4 L1169,371.5 L1170,371.6 L1171,371.8 L1172,371.9 L1173,372.0 L1174,372.1 L1175,372.2 L1176,372.3 L1177,372.4 L1178,372.5 L1179,372.7 L1180,372.8 L1181,372.9 L1182,373.0 L1183,373.1 L1184,373.2 L1185,373.3 L1186,373.5 L1187,373.6 L1188,373.7 L1189,373.8 L1190,373.9 L1191,374.0 L1192,374.1 L1193,374.2 L1194,374.4 L1195,374.5 L1196,374.6 L1197,374.7 L1198,374.8 L1199,374.9 L1200,375.0 L1201,375.2 L1202,375.3 L1203,375.4 L1204,375.5 L1205,375.6 L1206,375.7 L1207,375.8 L1208,375.9 L1209,376.0 L1210,376.1 L1211,376.2 L1212,376.2" stroke="#0000ff" stroke-width="1.2" fill="none"/>
<path d="M48.5,202.5 H52.5 V252 L55.5,247.7 L56.3,266.9 L59.9,263.8 L60.7,278.1 L64.2,276.0 L65.0,289.0 L68.5,284.6 L69.3,296.7 L72.8,293.2 L73.6,304.2 L77.2,300.0 L78.0,310.0 L81.5,306.4 L82.3,315.3 L85.8,311.3 L86.6,320.1 L90.2,316.3 L91.0,324.8 L94.5,321.2 L95.3,329.6 L98.8,326.1 L99.6,334.3 L103.2,330.8 L104.0,338.6 L107.5,334.4 L108.3,341.4 L111.8,337.9 L112.6,344.2 L116.1,341.5 L116.9,347.0 L120.5,344.6 L121.3,349.7 L124.8,346.5 L125.6,352.1 L129.1,348.5 L129.9,354.5 L133.5,350.4 L134.3,356.8 L137.8,352.4 L138.6,359.2 L142.1,354.2 L142.9,361.0 L146.5,355.9 L147.3,362.5 L150.8,357.6 L151.6,364.1 L155.1,359.4 L155.9,365.6 L159.5,361.0 L160.3,367.0 L163.8,361.3 L164.6,367.5 L168.1,361.7 L168.9,367.9 L172.4,362.0 L173.2,368.3 L176.8,362.3 L177.6,368.8 L181.1,362.5 L181.9,369.0 L185.4,362.7 L186.2,369.0 L189.8,362.8 L190.6,369.0 L194.1,362.9 L194.9,369.0 L198.4,363.0 L199.2,369.0 L202.8,362.6 L203.6,368.8 L207.1,362.2 L207.9,368.6 L211.4,361.8 L212.2,368.4 L215.7,361.3 L216.5,368.2 L220.1,360.9 L220.9,367.9 L224.4,360.2 L225.2,367.5 L228.7,359.6 L229.5,367.0 L233.1,358.9 L233.9,366.6 L237.4,358.3 L238.2,366.2 L241.7,357.7 L242.5,365.7 L246.1,357.1 L246.9,365.2 L250.4,356.5 L251.2,364.6 L254.7,355.9 L255.5,364.1 L259.0,355.4 L259.8,363.6 L263.4,354.8 L264.2,363.0 L267.7,354.2 L268.5,362.5 L272.0,353.6 L272.8,362.0 L276.4,353.0 L277.2,361.4 L280.7,352.5 L281.5,360.9 L285.0,351.9 L285.8,360.3 L289.4,351.3 L290.2,359.8 L293.7,350.7 L294.5,359.3 L298.0,350.2 L298.8,358.7 L302.3,349.4 L303.1,358.0 L306.7,348.5 L307.5,357.2 L311.0,347.6 L311.8,356.3 L315.3,346.8 L316.1,355.5 L319.7,345.9 L320.5,354.6 L324.0,345.0 L324.8,353.8 L328.3,344.2 L329.1,353.0 L332.7,343.3 L333.5,352.1 L337.0,342.4 L337.8,351.3 L341.3,341.6 L342.1,350.5 L345.6,340.7 L346.4,349.6 L350.0,339.8 L350.8,348.8 L354.3,339.0 L355.1,347.9 L358.6,338.1 L359.4,347.1 L363.0,337.0 L363.8,346.0 L367.3,335.8 L368.1,344.8 L371.6,334.6 L372.4,343.6 L375.9,333.4 L376.7,342.4 L380.3,332.2 L381.1,341.2 L384.6,331.0 L385.4,340.0 L388.9,329.8 L389.7,338.8 L393.3,328.6 L394.1,337.6 L397.6,327.4 L398.4,336.4 L401.9,326.4 L402.7,335.4 L406.3,325.5 L407.1,334.5 L410.6,324.5 L411.4,333.5 L414.9,323.6 L415.7,332.6 L419.2,322.7 L420.0,331.7 L423.6,321.7 L424.4,330.7 L427.9,320.8 L428.7,329.8 L432.2,319.8 L433.0,328.8 L436.6,318.9 L437.4,327.9 L440.9,318.0 L441.7,327.0 L445.2,317.0 L446.0,326.0 L449.6,316.1 L450.4,325.1 L453.9,315.2 L454.7,324.2 L458.2,314.2 L459.0,323.2 L462.5,313.3 L463.3,322.2 L466.9,312.5 L467.7,321.2 L471.2,311.6 L472.0,320.2 L475.5,310.7 L476.3,319.2 L479.9,309.9 L480.7,318.3 L484.2,309.2 L485.0,317.8 L488.5,308.4 L489.3,317.2 L492.9,307.7 L493.7,316.7 L497.2,307.0 L498.0,316.2 L501.5,306.3 L502.3,315.6 L505.8,305.6 L506.6,315.1 L510.2,304.8 L511.0,314.6 L514.5,304.1 L515.3,314.0 L518.8,303.4 L519.6,313.5 L523.2,302.7 L524.0,313.0 L527.5,302.0 L528.3,312.4 L531.8,301.2 L532.6,311.9 L536.2,300.5 L537.0,311.4 L540.5,299.9 L541.3,310.9 L544.8,299.4 L545.6,310.4 L549.1,298.9 L549.9,310.0 L553.5,298.5 L554.3,309.5 L557.8,298.0 L558.6,309.1 L562.1,297.6 L562.9,308.6 L566.5,297.1 L567.3,308.2 L570.8,296.6 L571.6,307.7 L575.1,296.2 L575.9,307.3 L579.5,295.7 L580.3,306.8 L583.8,295.2 L584.6,306.4 L588.1,294.8 L588.9,305.9 L592.5,294.3 L593.3,305.5 L596.8,293.9 L597.6,305.1 L601.1,293.4 L601.9,304.6 L605.4,293.0 L606.2,304.2 L609.8,292.5 L610.6,303.7 L614.1,292.1 L614.9,303.3 L618.4,291.6 L619.2,302.8 L622.8,291.2 L623.6,302.4 L627.1,290.8 L627.9,302.0 L631.4,290.3 L632.2,301.5 L635.8,289.9 L636.6,301.1 L640.1,289.4 L640.9,300.6 L644.4,289.0 L645.2,300.2 L648.7,288.6 L649.5,299.8 L653.1,288.1 L653.9,299.3 L657.4,287.7 L658.2,298.9 L661.7,287.2 L662.5,298.4 L666.1,286.8 L666.9,298.0 L670.4,286.4 L671.2,297.6 L674.7,285.9 L675.5,297.1 L679.1,285.5 L679.9,296.7 L683.4,285.0 L684.2,296.2 L687.7,284.6 L688.5,295.8 L692.0,284.2 L692.8,295.4 L696.4,283.7 L697.2,294.9 L700.7,283.3 L701.5,294.5 L705.0,282.8 L705.8,294.0 L709.4,282.4 L710.2,293.6 L713.7,282.0 L714.5,293.2 L718.0,281.5 L718.8,292.7 L722.4,281.1 L723.2,292.4 L726.7,280.7 L727.5,292.2 L731.0,280.3 L731.8,291.9 L735.3,279.9 L736.1,291.6 L739.7,279.6 L740.5,291.4 L744.0,279.2 L744.8,291.1 L748.3,278.8 L749.1,290.9 L752.7,278.4 L753.5,290.6 L757.0,278.0 L757.8,290.3 L761.3,277.6 L762.1,290.1 L765.7,277.2 L766.5,289.8 L770.0,276.8 L770.8,289.6 L774.3,276.4 L775.1,289.3 L778.6,276.1 L779.4,289.0 L783.0,275.7 L783.8,288.7 L787.3,275.4 L788.1,288.5 L791.6,275.1 L792.4,288.2 L796.0,274.7 L796.8,287.9 L800.3,274.4 L801.1,287.6 L804.6,274.1 L805.4,287.3 L809.0,273.8 L809.8,287.0 L813.3,273.4 L814.1,286.7 L817.6,273.1 L818.4,286.4 L821.9,272.8 L822.7,286.2 L826.3,272.5 L827.1,285.9 L830.6,272.1 L831.4,285.6 L834.9,271.8 L835.7,285.3 L839.3,271.5 L840.1,285.0 L843.6,271.4 L844.4,284.9 L847.9,271.2 L848.7,284.8 L852.3,271.1 L853.1,284.6 L856.6,270.9 L857.4,284.5 L860.9,270.8 L861.7,284.4 L865.2,270.7 L866.0,284.3 L869.6,270.5 L870.4,284.2 L873.9,270.4 L874.7,284.0 L878.2,270.2 L879.0,283.9 L882.6,270.1 L883.4,283.8 L886.9,270.0 L887.7,283.7 L891.2,269.8 L892.0,283.6 L895.6,269.7 L896.4,283.5 L899.9,269.5 L900.7,283.3 L904.2,269.4 L905.0,283.2 L908.5,269.2 L909.3,283.1 L912.9,269.1 L913.7,283.0 L917.2,269.0 L918.0,282.9 L921.5,268.8 L922.3,282.7 L925.9,268.7 L926.7,282.6 L930.2,268.5 L931.0,282.5 L934.5,268.4 L935.3,282.4 L938.9,268.3 L939.7,282.3 L943.2,268.1 L944.0,282.1 L947.5,268.0 L948.3,282.0 L951.8,267.8 L952.6,281.9 L956.2,267.7 L957.0,281.8 L960.5,267.5 L961.3,281.7 L964.8,267.3 L965.6,281.5 L969.2,267.1 L970.0,281.3 L973.5,266.9 L974.3,281.2 L977.8,266.7 L978.6,281.0 L982.2,266.5 L983.0,280.8 L986.5,266.3 L987.3,280.7 L990.8,266.1 L991.6,280.5 L995.1,265.9 L995.9,280.3 L999.5,265.7 L1000.3,280.2 L1003.8,265.5 L1004.6,280.0 L1008.1,265.3 L1008.9,279.8 L1012.5,265.1 L1013.3,279.7 L1016.8,264.9 L1017.6,279.5 L1021.1,264.7 L1021.9,279.3 L1025.5,264.6 L1026.3,279.1 L1029.8,264.5 L1030.6,279.0 L1034.1,264.4 L1034.9,278.8 L1038.4,264.2 L1039.2,278.6 L1042.8,264.1 L1043.6,278.5 L1047.1,264.0 L1047.9,278.3 L1051.4,263.8 L1052.2,278.1 L1055.8,263.7 L1056.6,277.9 L1060.1,263.6 L1060.9,277.8 L1064.4,263.4 L1065.2,277.6 L1068.8,263.3 L1069.6,277.4 L1073.1,263.2 L1073.9,277.2 L1077.4,263.1 L1078.2,277.1 L1081.7,262.9 L1082.5,277.0 L1086.1,262.8 L1086.9,276.9 L1090.4,262.7 L1091.2,276.8 L1094.7,262.6 L1095.5,276.8 L1099.1,262.5 L1099.9,276.7 L1103.4,262.4 L1104.2,276.6 L1107.7,262.2 L1108.5,276.6 L1112.1,262.1 L1112.9,276.5 L1116.4,262.0 L1117.2,276.4 L1120.7,261.9 L1121.5,276.4 L1125.0,261.8 L1125.8,276.3 L1129.4,261.7 L1130.2,276.2 L1133.7,261.6 L1134.5,276.2 L1138.0,261.4 L1138.8,276.1 L1142.4,261.3 L1143.2,276.0 L1146.7,261.2 L1147.5,276.0 L1151.0,261.1 L1151.8,275.9 L1155.4,261.0 L1156.2,275.8 L1159.7,260.9 L1160.5,275.8 L1164.0,260.8 L1164.8,275.7 L1168.3,260.6 L1169.1,275.6 L1172.7,260.5 L1173.5,275.6 L1177.0,260.4 L1177.8,275.5 L1181.3,260.3 L1182.1,275.5 L1185.7,260.2 L1186.5,275.4 L1190.0,260.1 L1190.8,275.3 L1194.3,259.9 L1195.1,275.3 L1198.7,259.8 L1199.5,275.2 L1203.0,259.7 L1203.8,275.1 L1207.3,259.6 L1208.1,275.1 L1211.2,259.5 L1212.0,275.0" stroke="#ff0000" stroke-width="1.3" fill="none"/>
<path d="M49.00,204.0 L52.00,148.0 L52.20,173.1 L52.50,161.1 L52.80,193.9 L53.33,204.0 L53.33,204.0 L56.33,148.0 L56.53,165.1 L56.83,153.1 L57.13,179.4 L57.66,204.0 L57.66,204.0 L60.66,148.0 L60.86,181.0 L61.16,169.0 L61.46,187.7 L61.99,204.0 L61.99,204.0 L64.99,148.0 L65.19,165.8 L65.49,153.8 L65.79,190.1 L66.32,204.0 L66.32,204.0 L69.32,148.0 L69.52,172.0 L69.82,160.0 L70.12,178.3 L70.65,204.0 L70.65,204.0 L73.65,148.0 L73.85,178.2 L74.15,166.2 L74.45,193.1 L74.98,204.0 L74.98,204.0 L77.98,148.0 L78.18,163.0 L78.48,151.0 L78.78,183.4 L79.31,204.0 L79.31,204.0 L82.31,148.0 L82.51,178.9 L82.81,166.9 L83.11,182.7 L83.64,204.0 L83.64,204.0 L86.64,148.0 L86.84,170.9 L87.14,158.9 L87.44,193.4 L87.97,204.0 L87.97,204.0 L90.97,148.0 L91.17,166.7 L91.47,154.7 L91.77,178.5 L92.30,204.0 L92.30,204.0 L95.30,148.0 L95.50,180.9 L95.80,168.9 L96.10,189.5 L96.63,204.0 L96.63,204.0 L99.63,148.0 L99.83,164.4 L100.13,152.4 L100.43,188.4 L100.96,204.0 L100.96,204.0 L103.96,148.0 L104.16,174.2 L104.46,162.2 L104.76,179.0 L105.29,204.0 L105.29,204.0 L108.29,148.0 L108.49,176.4 L108.79,164.4 L109.09,193.8 L109.62,204.0 L109.62,204.0 L112.62,148.0 L112.82,163.4 L113.12,151.4 L113.42,181.7 L113.95,204.0 L113.95,204.0 L116.95,148.0 L117.15,180.1 L117.45,168.1 L117.75,184.5 L118.28,204.0 L118.28,204.0 L121.28,148.0 L121.48,168.8 L121.78,156.8 L122.08,192.5 L122.61,204.0 L122.61,204.0 L125.61,148.0 L125.81,168.6 L126.11,156.6 L126.41,178.1 L126.94,204.0 L126.94,204.0 L129.94,148.0 L130.14,180.2 L130.44,168.2 L130.74,191.1 L131.27,204.0 L131.27,204.0 L134.27,148.0 L134.47,163.5 L134.77,151.5 L135.07,186.5 L135.60,204.0 L135.60,204.0 L138.60,148.0 L138.80,176.2 L139.10,164.2 L139.40,180.2 L139.93,204.0 L139.93,204.0 L142.93,148.0 L143.13,174.4 L143.43,162.4 L143.73,194.0 L144.26,204.0 L144.26,204.0 L147.26,148.0 L147.46,164.3 L147.76,152.3 L148.06,180.2 L148.59,204.0 L148.59,204.0 L151.59,148.0 L151.79,180.8 L152.09,168.8 L152.39,186.5 L152.92,204.0 L152.92,204.0 L155.92,148.0 L156.12,166.9 L156.42,154.9 L156.72,191.1 L157.25,204.0 L157.25,204.0 L160.25,148.0 L160.45,170.6 L160.75,158.6 L161.05,178.1 L161.58,204.0 L161.58,204.0 L164.58,148.0 L164.78,179.1 L165.08,167.1 L165.38,192.4 L165.91,204.0 L165.91,204.0 L168.91,148.0 L169.11,163.0 L169.41,151.0 L169.71,184.6 L170.24,204.0 L170.24,204.0 L173.24,148.0 L173.44,177.9 L173.74,165.9 L174.04,181.6 L174.57,204.0 L174.57,204.0 L177.57,148.0 L177.77,172.3 L178.07,160.3 L178.37,193.8 L178.90,204.0 L178.90,204.0 L181.90,148.0 L182.10,165.6 L182.40,153.6 L182.70,179.0 L183.23,204.0 L183.23,204.0 L186.23,148.0 L186.43,181.0 L186.73,169.0 L187.03,188.3 L187.56,204.0 L187.56,204.0 L190.56,148.0 L190.76,165.3 L191.06,153.3 L191.36,189.5 L191.89,204.0 L191.89,204.0 L194.89,148.0 L195.09,172.8 L195.39,160.8 L195.69,178.5 L196.22,204.0 L196.22,204.0 L199.22,148.0 L199.42,177.6 L199.72,165.6 L200.02,193.4 L200.55,204.0 L200.55,204.0 L203.55,148.0 L203.75,163.1 L204.05,151.1 L204.35,182.8 L204.88,204.0 L204.88,204.0 L207.88,148.0 L208.08,179.4 L208.38,167.4 L208.68,183.3 L209.21,204.0 L209.21,204.0 L212.21,148.0 L212.41,170.2 L212.71,158.2 L213.01,193.1 L213.54,204.0 L213.54,204.0 L216.54,148.0 L216.74,167.3 L217.04,155.3 L217.34,178.3 L217.87,204.0 L217.87,204.0 L220.87,148.0 L221.07,180.7 L221.37,168.7 L221.67,190.1 L222.20,204.0 L222.20,204.0 L225.20,148.0 L225.40,164.1 L225.70,152.1 L226.00,187.7 L226.53,204.0 L226.53,204.0 L229.53,148.0 L229.73,174.9 L230.03,162.9 L230.33,179.4 L230.86,204.0 L230.86,204.0 L233.86,148.0 L234.06,175.7 L234.36,163.7 L234.66,193.9 L235.19,204.0 L235.19,204.0 L238.19,148.0 L238.39,163.7 L238.69,151.7 L238.99,181.1 L239.52,204.0 L239.52,204.0 L242.52,148.0 L242.72,180.4 L243.02,168.4 L243.32,185.2 L243.85,204.0 L243.85,204.0 L246.85,148.0 L247.05,168.1 L247.35,156.1 L247.65,192.0 L248.18,204.0 L248.18,204.0 L251.18,148.0 L251.38,169.3 L251.68,157.3 L251.98,178.0 L252.51,204.0 L252.51,204.0 L255.51,148.0 L255.71,179.9 L256.01,167.9 L256.31,191.6 L256.84,204.0 L256.84,204.0 L259.84,148.0 L260.04,163.3 L260.34,151.3 L260.64,185.8 L261.17,204.0 L261.17,204.0 L264.17,148.0 L264.37,176.8 L264.67,164.8 L264.97,180.6 L265.50,204.0 L265.50,204.0 L268.50,148.0 L268.70,173.7 L269.00,161.7 L269.30,194.0 L269.83,204.0 L269.83,204.0 L272.83,148.0 L273.03,164.7 L273.33,152.7 L273.63,179.7 L274.16,204.0 L274.16,204.0 L277.16,148.0 L277.36,180.9 L277.66,168.9 L277.96,187.1 L278.49,204.0 L278.49,204.0 L281.49,148.0 L281.69,166.3 L281.99,154.3 L282.29,190.6 L282.82,204.0 L282.82,204.0 L285.82,148.0 L286.02,171.4 L286.32,159.4 L286.62,178.2 L287.15,204.0 L287.15,204.0 L290.15,148.0 L290.35,178.6 L290.65,166.6 L290.95,192.8 L291.48,204.0 L291.48,204.0 L294.48,148.0 L294.68,163.0 L294.98,151.0 L295.28,183.9 L295.81,204.0 L295.81,204.0 L298.81,148.0 L299.01,178.5 L299.31,166.5 L299.61,182.2 L300.14,204.0 L300.14,204.0 L303.14,148.0 L303.34,171.5 L303.64,159.5 L303.94,193.6 L304.47,204.0 L304.47,204.0 L307.47,148.0 L307.67,166.2 L307.97,154.2 L308.27,178.7 L308.80,204.0 L308.80,204.0 L311.80,148.0 L312.00,180.9 L312.30,168.9 L312.60,189.0 L313.13,204.0 L313.13,204.0 L316.13,148.0 L316.33,164.8 L316.63,152.8 L316.93,188.9 L317.46,204.0 L317.46,204.0 L320.46,148.0 L320.66,173.5 L320.96,161.5 L321.26,178.8 L321.79,204.0 L321.79,204.0 L324.79,148.0 L324.99,177.0 L325.29,165.0 L325.59,193.6 L326.12,204.0 L326.12,204.0 L329.12,148.0 L329.32,163.2 L329.62,151.2 L329.92,182.2 L330.45,204.0 L330.45,204.0 L333.45,148.0 L333.65,179.8 L333.95,167.8 L334.25,184.0 L334.78,204.0 L334.78,204.0 L337.78,148.0 L337.98,169.4 L338.28,157.4 L338.58,192.8 L339.11,204.0 L339.11,204.0 L342.11,148.0 L342.31,168.0 L342.61,156.0 L342.91,178.1 L343.44,204.0 L343.44,204.0 L346.44,148.0 L346.64,180.5 L346.94,168.5 L347.24,190.7 L347.77,204.0 L347.77,204.0 L350.77,148.0 L350.97,163.7 L351.27,151.7 L351.57,187.1 L352.10,204.0 L352.10,204.0 L355.10,148.0 L355.30,175.6 L355.60,163.6 L355.90,179.8 L356.43,204.0 L356.43,204.0 L359.43,148.0 L359.63,175.0 L359.93,163.0 L360.23,194.0 L360.76,204.0 L360.76,204.0 L363.76,148.0 L363.96,164.0 L364.26,152.0 L364.56,180.6 L365.09,204.0 L365.09,204.0 L368.09,148.0 L368.29,180.6 L368.59,168.6 L368.89,185.9 L369.42,204.0 L369.42,204.0 L372.42,148.0 L372.62,167.4 L372.92,155.4 L373.22,191.6 L373.75,204.0 L373.75,204.0 L376.75,148.0 L376.95,170.0 L377.25,158.0 L377.55,178.0 L378.08,204.0 L378.08,204.0 L381.08,148.0 L381.28,179.5 L381.58,167.5 L381.88,192.1 L382.41,204.0 L382.41,204.0 L385.41,148.0 L385.61,163.1 L385.91,151.1 L386.21,185.2 L386.74,204.0 L386.74,209.0 L389.74,148.0 L389.94,177.5 L390.24,165.5 L390.54,181.2 L391.07,204.0 L391.07,204.0 L394.07,148.0 L394.27,172.9 L394.57,160.9 L394.87,193.9 L395.40,204.0 L395.40,204.0 L398.40,148.0 L398.60,165.2 L398.90,153.2 L399.20,179.3 L399.73,204.0 L399.73,204.0 L402.73,148.0 L402.93,181.0 L403.23,169.0 L403.53,187.8 L404.06,204.0 L404.06,204.0 L407.06,148.0 L407.26,165.7 L407.56,153.7 L407.86,190.0 L408.39,204.0 L408.39,204.0 L411.39,148.0 L411.59,172.1 L411.89,160.1 L412.19,178.3 L412.72,204.0 L412.72,204.0 L415.72,148.0 L415.92,178.1 L416.22,166.1 L416.52,193.1 L417.05,204.0 L417.05,204.0 L420.05,148.0 L420.25,163.0 L420.55,151.0 L420.85,183.3 L421.38,204.0 L421.38,204.0 L424.38,148.0 L424.58,179.0 L424.88,167.0 L425.18,182.8 L425.71,204.0 L425.71,204.0 L428.71,148.0 L428.91,170.8 L429.21,158.8 L429.51,193.3 L430.04,204.0 L430.04,204.0 L433.04,148.0 L433.24,166.8 L433.54,154.8 L433.84,178.5 L434.37,204.0 L434.37,204.0 L437.37,148.0 L437.57,180.8 L437.87,168.8 L438.17,189.6 L438.70,204.0 L438.70,204.0 L441.70,148.0 L441.90,164.4 L442.20,152.4 L442.50,188.3 L443.03,204.0 L443.03,204.0 L446.03,148.0 L446.23,174.3 L446.53,162.3 L446.83,179.1 L447.36,204.0 L447.36,204.0 L450.36,148.0 L450.56,176.3 L450.86,164.3 L451.16,193.8 L451.69,204.0 L451.69,204.0 L454.69,148.0 L454.89,163.4 L455.19,151.4 L455.49,181.6 L456.02,204.0 L456.02,204.0 L459.02,148.0 L459.22,180.1 L459.52,168.1 L459.82,184.7 L460.35,204.0 L460.35,204.0 L463.35,148.0 L463.55,168.7 L463.85,156.7 L464.15,192.4 L464.68,204.0 L464.68,204.0 L467.68,148.0 L467.88,168.7 L468.18,156.7 L468.48,178.0 L469.01,204.0 L469.01,204.0 L472.01,148.0 L472.21,180.2 L472.51,168.2 L472.81,191.2 L473.34,204.0 L473.34,204.0 L476.34,148.0 L476.54,163.5 L476.84,151.5 L477.14,186.4 L477.67,204.0 L477.67,204.0 L480.67,148.0 L480.87,176.3 L481.17,164.3 L481.47,180.2 L482.00,204.0 L482.00,204.0 L485.00,148.0 L485.20,174.3 L485.50,162.3 L485.80,194.0 L486.33,204.0 L486.33,204.0 L489.33,148.0 L489.53,164.4 L489.83,152.4 L490.13,180.1 L490.66,204.0 L490.66,210.0 L493.66,148.0 L493.86,180.8 L494.16,168.8 L494.46,186.6 L494.99,204.0 L494.99,204.0 L497.99,148.0 L498.19,166.8 L498.49,154.8 L498.79,191.1 L499.32,204.0 L499.32,204.0 L502.32,148.0 L502.52,170.7 L502.82,158.7 L503.12,178.1 L503.65,204.0 L503.65,204.0 L506.65,148.0 L506.85,179.0 L507.15,167.0 L507.45,192.5 L507.98,204.0 L507.98,204.0 L510.98,148.0 L511.18,163.0 L511.48,151.0 L511.78,184.5 L512.31,204.0 L512.31,204.0 L515.31,148.0 L515.51,178.0 L515.81,166.0 L516.11,181.7 L516.64,204.0 L516.64,204.0 L519.64,148.0 L519.84,172.2 L520.14,160.2 L520.44,193.8 L520.97,204.0 L520.97,204.0 L523.97,148.0 L524.17,165.7 L524.47,153.7 L524.77,179.0 L525.30,204.0 L525.30,204.0 L528.30,148.0 L528.50,181.0 L528.80,169.0 L529.10,188.4 L529.63,204.0 L529.63,204.0 L532.63,148.0 L532.83,165.2 L533.13,153.2 L533.43,189.4 L533.96,204.0 L533.96,204.0 L536.96,148.0 L537.16,172.9 L537.46,160.9 L537.76,178.5 L538.29,204.0 L538.29,204.0 L541.29,148.0 L541.49,177.5 L541.79,165.5 L542.09,193.4 L542.62,204.0 L542.62,204.0 L545.62,148.0 L545.82,163.1 L546.12,151.1 L546.42,182.7 L546.95,204.0 L546.95,204.0 L549.95,148.0 L550.15,179.4 L550.45,167.4 L550.75,183.4 L551.28,204.0 L551.28,204.0 L554.28,148.0 L554.48,170.0 L554.78,158.0 L555.08,193.1 L555.61,204.0 L555.61,204.0 L558.61,148.0 L558.81,167.4 L559.11,155.4 L559.41,178.3 L559.94,204.0 L559.94,204.0 L562.94,148.0 L563.14,180.7 L563.44,168.7 L563.74,190.2 L564.27,204.0 L564.27,204.0 L567.27,148.0 L567.47,164.0 L567.77,152.0 L568.07,187.6 L568.60,204.0 L568.60,204.0 L571.60,148.0 L571.80,175.0 L572.10,163.0 L572.40,179.4 L572.93,204.0 L572.93,204.0 L575.93,148.0 L576.13,175.6 L576.43,163.6 L576.73,193.9 L577.26,204.0 L577.26,204.0 L580.26,148.0 L580.46,163.7 L580.76,151.7 L581.06,181.0 L581.59,204.0 L581.59,204.0 L584.59,148.0 L584.79,180.4 L585.09,168.4 L585.39,185.3 L585.92,204.0 L585.92,204.0 L588.92,148.0 L589.12,168.0 L589.42,156.0 L589.72,192.0 L590.25,204.0 L590.25,204.0 L593.25,148.0 L593.45,169.4 L593.75,157.4 L594.05,178.0 L594.58,204.0 L594.58,204.0 L597.58,148.0 L597.78,179.8 L598.08,167.8 L598.38,191.7 L598.91,204.0 L598.91,204.0 L601.91,148.0 L602.11,163.2 L602.41,151.2 L602.71,185.7 L603.24,204.0 L603.24,204.0 L606.24,148.0 L606.44,176.9 L606.74,164.9 L607.04,180.7 L607.57,204.0 L607.57,204.0 L610.57,148.0 L610.77,173.6 L611.07,161.6 L611.37,194.0 L611.90,204.0 L611.90,204.0 L614.90,148.0 L615.10,164.8 L615.40,152.8 L615.70,179.7 L616.23,204.0 L616.23,204.0 L619.23,148.0 L619.43,180.9 L619.73,168.9 L620.03,187.2 L620.56,204.0 L620.56,204.0 L623.56,148.0 L623.76,166.2 L624.06,154.2 L624.36,190.5 L624.89,204.0 L624.89,204.0 L627.89,148.0 L628.09,171.5 L628.39,159.5 L628.69,178.2 L629.22,204.0 L629.22,204.0 L632.22,148.0 L632.42,178.5 L632.72,166.5 L633.02,192.9 L633.55,204.0 L633.55,204.0 L636.55,148.0 L636.75,163.0 L637.05,151.0 L637.35,183.8 L637.88,204.0 L637.88,204.0 L640.88,148.0 L641.08,178.6 L641.38,166.6 L641.68,182.3 L642.21,204.0 L642.21,204.0 L645.21,148.0 L645.41,171.4 L645.71,159.4 L646.01,193.6 L646.54,204.0 L646.54,204.0 L649.54,148.0 L649.74,166.3 L650.04,154.3 L650.34,178.7 L650.87,204.0 L650.87,204.0 L653.87,148.0 L654.07,180.9 L654.37,168.9 L654.67,189.1 L655.20,204.0 L655.20,204.0 L658.20,148.0 L658.40,164.7 L658.70,152.7 L659.00,188.8 L659.53,204.0 L659.53,204.0 L662.53,148.0 L662.73,173.6 L663.03,161.6 L663.33,178.8 L663.86,204.0 L663.86,204.0 L666.86,148.0 L667.06,176.9 L667.36,164.9 L667.66,193.6 L668.19,204.0 L668.19,204.0 L671.19,148.0 L671.39,163.3 L671.69,151.3 L671.99,182.1 L672.52,204.0 L672.52,204.0 L675.52,148.0 L675.72,179.8 L676.02,167.8 L676.32,184.1 L676.85,204.0 L676.85,204.0 L679.85,148.0 L680.05,169.3 L680.35,157.3 L680.65,192.7 L681.18,204.0 L681.18,204.0 L684.18,148.0 L684.38,168.1 L684.68,156.1 L684.98,178.1 L685.51,204.0 L685.51,204.0 L688.51,148.0 L688.71,180.4 L689.01,168.4 L689.31,190.7 L689.84,204.0 L689.84,204.0 L692.84,148.0 L693.04,163.7 L693.34,151.7 L693.64,187.0 L694.17,204.0 L694.17,204.0 L697.17,148.0 L697.37,175.7 L697.67,163.7 L697.97,179.9 L698.50,204.0 L698.50,204.0 L701.50,148.0 L701.70,174.9 L702.00,162.9 L702.30,194.0 L702.83,204.0 L702.83,204.0 L705.83,148.0 L706.03,164.0 L706.33,152.0 L706.63,180.5 L707.16,204.0 L707.16,204.0 L710.16,148.0 L710.36,180.7 L710.66,168.7 L710.96,186.0 L711.49,204.0 L711.49,204.0 L714.49,148.0 L714.69,167.3 L714.99,155.3 L715.29,191.5 L715.82,204.0 L715.82,204.0 L718.82,148.0 L719.02,170.1 L719.32,158.1 L719.62,178.0 L720.15,204.0 L720.15,204.0 L723.15,148.0 L723.35,179.4 L723.65,167.4 L723.95,192.1 L724.48,204.0 L724.48,204.0 L727.48,148.0 L727.68,163.1 L727.98,151.1 L728.28,185.0 L728.81,204.0 L728.81,204.0 L731.81,148.0 L732.01,177.5 L732.31,165.5 L732.61,181.2 L733.14,204.0 L733.14,204.0 L736.14,148.0 L736.34,172.8 L736.64,160.8 L736.94,193.9 L737.47,204.0 L737.47,204.0 L740.47,148.0 L740.67,165.3 L740.97,153.3 L741.27,179.3 L741.80,204.0 L741.80,204.0 L744.80,148.0 L745.00,181.0 L745.30,169.0 L745.60,187.9 L746.13,204.0 L746.13,204.0 L749.13,148.0 L749.33,165.6 L749.63,153.6 L749.93,189.9 L750.46,204.0 L750.46,204.0 L753.46,148.0 L753.66,172.3 L753.96,160.3 L754.26,178.4 L754.79,204.0 L754.79,204.0 L757.79,148.0 L757.99,178.0 L758.29,166.0 L758.59,193.2 L759.12,204.0 L759.12,204.0 L762.12,148.0 L762.32,163.0 L762.62,151.0 L762.92,183.2 L763.45,204.0 L763.45,204.0 L766.45,148.0 L766.65,179.1 L766.95,167.1 L767.25,182.9 L767.78,204.0 L767.78,204.0 L770.78,148.0 L770.98,170.7 L771.28,158.7 L771.58,193.3 L772.11,204.0 L772.11,204.0 L775.11,148.0 L775.31,166.9 L775.61,154.9 L775.91,178.4 L776.44,204.0 L776.44,204.0 L779.44,148.0 L779.64,180.8 L779.94,168.8 L780.24,189.7 L780.77,204.0 L780.77,204.0 L783.77,148.0 L783.97,164.3 L784.27,152.3 L784.57,188.2 L785.10,204.0 L785.10,204.0 L788.10,148.0 L788.30,174.4 L788.60,162.4 L788.90,179.1 L789.43,204.0 L789.43,204.0 L792.43,148.0 L792.63,176.2 L792.93,164.2 L793.23,193.8 L793.76,204.0 L793.76,204.0 L796.76,148.0 L796.96,163.5 L797.26,151.5 L797.56,181.5 L798.09,204.0 L798.09,204.0 L801.09,148.0 L801.29,180.2 L801.59,168.2 L801.89,184.8 L802.42,204.0 L802.42,204.0 L805.42,148.0 L805.62,168.6 L805.92,156.6 L806.22,192.3 L806.75,204.0 L806.75,204.0 L809.75,148.0 L809.95,168.8 L810.25,156.8 L810.55,178.0 L811.08,204.0 L811.08,204.0 L814.08,148.0 L814.28,180.1 L814.58,168.1 L814.88,191.3 L815.41,204.0 L815.41,204.0 L818.41,148.0 L818.61,163.4 L818.91,151.4 L819.21,186.3 L819.74,204.0 L819.74,204.0 L822.74,148.0 L822.94,176.4 L823.24,164.4 L823.54,180.3 L824.07,204.0 L824.07,204.0 L827.07,148.0 L827.27,174.2 L827.57,162.2 L827.87,194.0 L828.40,204.0 L828.40,204.0 L831.40,148.0 L831.60,164.4 L831.90,152.4 L832.20,180.0 L832.73,204.0 L832.73,204.0 L835.73,148.0 L835.93,180.8 L836.23,168.8 L836.53,186.7 L837.06,204.0 L837.06,204.0 L840.06,148.0 L840.26,166.7 L840.56,154.7 L840.86,191.0 L841.39,204.0 L841.39,204.0 L844.39,148.0 L844.59,170.9 L844.89,158.9 L845.19,178.1 L845.72,204.0 L845.72,204.0 L848.72,148.0 L848.92,179.0 L849.22,167.0 L849.52,192.5 L850.05,204.0 L850.05,204.0 L853.05,148.0 L853.25,163.0 L853.55,151.0 L853.85,184.4 L854.38,204.0 L854.38,204.0 L857.38,148.0 L857.58,178.1 L857.88,166.1 L858.18,181.8 L858.71,204.0 L858.71,204.0 L861.71,148.0 L861.91,172.1 L862.21,160.1 L862.51,193.7 L863.04,204.0 L863.04,204.0 L866.04,148.0 L866.24,165.8 L866.54,153.8 L866.84,178.9 L867.37,204.0 L867.37,204.0 L870.37,148.0 L870.57,181.0 L870.87,169.0 L871.17,188.5 L871.70,204.0 L871.70,204.0 L874.70,148.0 L874.90,165.1 L875.20,153.1 L875.50,189.3 L876.03,204.0 L876.03,204.0 L879.03,148.0 L879.23,173.0 L879.53,161.0 L879.83,178.6 L880.36,204.0 L880.36,204.0 L883.36,148.0 L883.56,177.4 L883.86,165.4 L884.16,193.5 L884.69,204.0 L884.69,204.0 L887.69,148.0 L887.89,163.1 L888.19,151.1 L888.49,182.6 L889.02,204.0 L889.02,204.0 L892.02,148.0 L892.22,179.5 L892.52,167.5 L892.82,183.5 L893.35,204.0 L893.35,211.0 L896.35,148.0 L896.55,169.9 L896.85,157.9 L897.15,193.0 L897.68,204.0 L897.68,204.0 L900.68,148.0 L900.88,167.5 L901.18,155.5 L901.48,178.3 L902.01,204.0 L902.01,204.0 L905.01,148.0 L905.21,180.6 L905.51,168.6 L905.81,190.3 L906.34,204.0 L906.34,204.0 L909.34,148.0 L909.54,163.9 L909.84,151.9 L910.14,187.5 L910.67,204.0 L910.67,204.0 L913.67,148.0 L913.87,175.1 L914.17,163.1 L914.47,179.5 L915.00,204.0 L915.00,204.0 L918.00,148.0 L918.20,175.5 L918.50,163.5 L918.80,193.9 L919.33,204.0 L919.33,204.0 L922.33,148.0 L922.53,163.8 L922.83,151.8 L923.13,180.9 L923.66,204.0 L923.66,204.0 L926.66,148.0 L926.86,180.5 L927.16,168.5 L927.46,185.4 L927.99,204.0 L927.99,204.0 L930.99,148.0 L931.19,167.9 L931.49,155.9 L931.79,191.9 L932.32,204.0 L932.32,204.0 L935.32,148.0 L935.52,169.5 L935.82,157.5 L936.12,178.0 L936.65,204.0 L936.65,204.0 L939.65,148.0 L939.85,179.8 L940.15,167.8 L940.45,191.8 L940.98,204.0 L940.98,204.0 L943.98,148.0 L944.18,163.2 L944.48,151.2 L944.78,185.6 L945.31,204.0 L945.31,204.0 L948.31,148.0 L948.51,177.0 L948.81,165.0 L949.11,180.8 L949.64,204.0 L949.64,204.0 L952.64,148.0 L952.84,173.5 L953.14,161.5 L953.44,194.0 L953.97,204.0 L953.97,204.0 L956.97,148.0 L957.17,164.8 L957.47,152.8 L957.77,179.6 L958.30,204.0 L958.30,204.0 L961.30,148.0 L961.50,181.0 L961.80,169.0 L962.10,187.3 L962.63,204.0 L962.63,204.0 L965.63,148.0 L965.83,166.1 L966.13,154.1 L966.43,190.4 L966.96,204.0 L966.96,204.0 L969.96,148.0 L970.16,171.6 L970.46,159.6 L970.76,178.2 L971.29,204.0 L971.29,204.0 L974.29,148.0 L974.49,178.4 L974.79,166.4 L975.09,192.9 L975.62,204.0 L975.62,204.0 L978.62,148.0 L978.82,163.0 L979.12,151.0 L979.42,183.7 L979.95,204.0 L979.95,204.0 L982.95,148.0 L983.15,178.7 L983.45,166.7 L983.75,182.4 L984.28,204.0 L984.28,204.0 L987.28,148.0 L987.48,171.3 L987.78,159.3 L988.08,193.5 L988.61,204.0 L988.61,204.0 L991.61,148.0 L991.81,166.4 L992.11,154.4 L992.41,178.7 L992.94,204.0 L992.94,204.0 L995.94,148.0 L996.14,180.9 L996.44,168.9 L996.74,189.2 L997.27,204.0 L997.27,204.0 L1000.27,148.0 L1000.47,164.7 L1000.77,152.7 L1001.07,188.7 L1001.60,204.0 L1001.60,204.0 L1004.60,148.0 L1004.80,173.8 L1005.10,161.8 L1005.40,178.9 L1005.93,204.0 L1005.93,204.0 L1008.93,148.0 L1009.13,176.8 L1009.43,164.8 L1009.73,193.7 L1010.26,204.0 L1010.26,204.0 L1013.26,148.0 L1013.46,163.3 L1013.76,151.3 L1014.06,182.0 L1014.59,204.0 L1014.59,204.0 L1017.59,148.0 L1017.79,179.9 L1018.09,167.9 L1018.39,184.2 L1018.92,204.0 L1018.92,211.0 L1021.92,148.0 L1022.12,169.2 L1022.42,157.2 L1022.72,192.7 L1023.25,204.0 L1023.25,204.0 L1026.25,148.0 L1026.45,168.2 L1026.75,156.2 L1027.05,178.1 L1027.58,204.0 L1027.58,204.0 L1030.58,148.0 L1030.78,180.4 L1031.08,168.4 L1031.38,190.8 L1031.91,204.0 L1031.91,204.0 L1034.91,148.0 L1035.11,163.6 L1035.41,151.6 L1035.71,186.9 L1036.24,204.0 L1036.24,204.0 L1039.24,148.0 L1039.44,175.8 L1039.74,163.8 L1040.04,179.9 L1040.57,204.0 L1040.57,204.0 L1043.57,148.0 L1043.77,174.8 L1044.07,162.8 L1044.37,194.0 L1044.90,204.0 L1044.90,204.0 L1047.90,148.0 L1048.10,164.1 L1048.40,152.1 L1048.70,180.4 L1049.23,204.0 L1049.23,204.0 L1052.23,148.0 L1052.43,180.7 L1052.73,168.7 L1053.03,186.1 L1053.56,204.0 L1053.56,204.0 L1056.56,148.0 L1056.76,167.2 L1057.06,155.2 L1057.36,191.4 L1057.89,204.0 L1057.89,204.0 L1060.89,148.0 L1061.09,170.2 L1061.39,158.2 L1061.69,178.0 L1062.22,204.0 L1062.22,204.0 L1065.22,148.0 L1065.42,179.3 L1065.72,167.3 L1066.02,192.2 L1066.55,204.0 L1066.55,204.0 L1069.55,148.0 L1069.75,163.1 L1070.05,151.1 L1070.35,184.9 L1070.88,204.0 L1070.88,204.0 L1073.88,148.0 L1074.08,177.6 L1074.38,165.6 L1074.68,181.3 L1075.21,204.0 L1075.21,204.0 L1078.21,148.0 L1078.41,172.7 L1078.71,160.7 L1079.01,193.9 L1079.54,204.0 L1079.54,204.0 L1082.54,148.0 L1082.74,165.3 L1083.04,153.3 L1083.34,179.2 L1083.87,204.0 L1083.87,204.0 L1086.87,148.0 L1087.07,181.0 L1087.37,169.0 L1087.67,188.0 L1088.20,204.0 L1088.20,204.0 L1091.20,148.0 L1091.40,165.6 L1091.70,153.6 L1092.00,189.9 L1092.53,204.0 L1092.53,204.0 L1095.53,148.0 L1095.73,172.4 L1096.03,160.4 L1096.33,178.4 L1096.86,204.0 L1096.86,204.0 L1099.86,148.0 L1100.06,177.9 L1100.36,165.9 L1100.66,193.2 L1101.19,204.0 L1101.19,204.0 L1104.19,148.0 L1104.39,163.0 L1104.69,151.0 L1104.99,183.1 L1105.52,204.0 L1105.52,204.0 L1108.52,148.0 L1108.72,179.1 L1109.02,167.1 L1109.32,183.0 L1109.85,204.0 L1109.85,204.0 L1112.85,148.0 L1113.05,170.6 L1113.35,158.6 L1113.65,193.3 L1114.18,204.0 L1114.18,204.0 L1117.18,148.0 L1117.38,167.0 L1117.68,155.0 L1117.98,178.4 L1118.51,204.0 L1118.51,204.0 L1121.51,148.0 L1121.71,180.8 L1122.01,168.8 L1122.31,189.8 L1122.84,204.0 L1122.84,204.0 L1125.84,148.0 L1126.04,164.3 L1126.34,152.3 L1126.64,188.1 L1127.17,204.0 L1127.17,209.0 L1130.17,148.0 L1130.37,174.5 L1130.67,162.5 L1130.97,179.2 L1131.50,204.0 L1131.50,204.0 L1134.50,148.0 L1134.70,176.1 L1135.00,164.1 L1135.30,193.8 L1135.83,204.0 L1135.83,204.0 L1138.83,148.0 L1139.03,163.5 L1139.33,151.5 L1139.63,181.4 L1140.16,204.0 L1140.16,204.0 L1143.16,148.0 L1143.36,180.2 L1143.66,168.2 L1143.96,184.9 L1144.49,204.0 L1144.49,204.0 L1147.49,148.0 L1147.69,168.5 L1147.99,156.5 L1148.29,192.3 L1148.82,204.0 L1148.82,204.0 L1151.82,148.0 L1152.02,168.9 L1152.32,156.9 L1152.62,178.0 L1153.15,204.0 L1153.15,204.0 L1156.15,148.0 L1156.35,180.1 L1156.65,168.1 L1156.95,191.3 L1157.48,204.0 L1157.48,204.0 L1160.48,148.0 L1160.68,163.4 L1160.98,151.4 L1161.28,186.2 L1161.81,204.0 L1161.81,204.0 L1164.81,148.0 L1165.01,176.5 L1165.31,164.5 L1165.61,180.4 L1166.14,204.0 L1166.14,204.0 L1169.14,148.0 L1169.34,174.1 L1169.64,162.1 L1169.94,194.0 L1170.47,204.0 L1170.47,204.0 L1173.47,148.0 L1173.67,164.5 L1173.97,152.5 L1174.27,180.0 L1174.80,204.0 L1174.80,204.0 L1177.80,148.0 L1178.00,180.9 L1178.30,168.9 L1178.60,186.8 L1179.13,204.0 L1179.13,204.0 L1182.13,148.0 L1182.33,166.6 L1182.63,154.6 L1182.93,190.9 L1183.46,204.0 L1183.46,204.0 L1186.46,148.0 L1186.66,171.0 L1186.96,159.0 L1187.26,178.1 L1187.79,204.0 L1187.79,204.0 L1190.79,148.0 L1190.99,178.9 L1191.29,166.9 L1191.59,192.6 L1192.12,204.0 L1192.12,204.0 L1195.12,148.0 L1195.32,163.0 L1195.62,151.0 L1195.92,184.3 L1196.45,204.0 L1196.45,204.0 L1199.45,148.0 L1199.65,178.2 L1199.95,166.2 L1200.25,181.9 L1200.78,204.0 L1200.78,204.0 L1203.78,148.0 L1203.98,171.9 L1204.28,159.9 L1204.58,193.7 L1205.11,204.0 L1205.11,204.0 L1208.11,148.0 L1208.31,165.9 L1208.61,153.9 L1208.91,178.9 L1209.44,204.0 L1209.44,204.0 L1212.44,148.0 L1212.64,181.0 L1212.94,169.0 L1213.24,188.6 L1211.50,204.0" stroke="#00ff00" stroke-width="1" fill="none"/>
</g>
<g shape-rendering="crispEdges" fill="none" stroke="#c0c0c0" stroke-width="1">
<path d="M48.5,140 V390.5 H1212.5 V140.5 H48.5"/>
<path d="M41,140.5H48 M41,165.5H48 M41,190.5H48 M41,215.5H48 M41,240.5H48 M41,265.5H48 M41,290.5H48 M41,315.5H48 M41,340.5H48 M41,365.5H48 M41,390.5H48 M1213,140.5H1220 M1213,161.5H1220 M1213,182.5H1220 M1213,203.5H1220 M1213,223.5H1220 M1213,244.5H1220 M1213,265.5H1220 M1213,286.5H1220 M1213,307.5H1220 M1213,328.5H1220 M1213,348.5H1220 M1213,369.5H1220 M1213,390.5H1220 M48.5,391V398 M182.5,391V398 M317.5,391V398 M451.5,391V398 M585.5,391V398 M720.5,391V398 M854.5,391V398 M988.5,391V398 M1122.5,391V398 "/>
</g>
<text x="40" y="144.5" font-family="Liberation Sans" font-size="13" fill="#c0c0c0" text-anchor="end" letter-spacing="0.3" stroke="#c0c0c0" stroke-width="0.25">0.3V</text>
<text x="40" y="169.5" font-family="Liberation Sans" font-size="13" fill="#c0c0c0" text-anchor="end" letter-spacing="0.3" stroke="#c0c0c0" stroke-width="0.25">0.0V</text>
<text x="40" y="194.5" font-family="Liberation Sans" font-size="13" fill="#c0c0c0" text-anchor="end" letter-spacing="0.3" stroke="#c0c0c0" stroke-width="0.25">-0.3V</text>
<text x="40" y="219.5" font-family="Liberation Sans" font-size="13" fill="#c0c0c0" text-anchor="end" letter-spacing="0.3" stroke="#c0c0c0" stroke-width="0.25">-0.6V</text>
<text x="40" y="244.5" font-family="Liberation Sans" font-size="13" fill="#c0c0c0" text-anchor="end" letter-spacing="0.3" stroke="#c0c0c0" stroke-width="0.25">-0.9V</text>
<text x="40" y="269.5" font-family="Liberation Sans" font-size="13" fill="#c0c0c0" text-anchor="end" letter-spacing="0.3" stroke="#c0c0c0" stroke-width="0.25">-1.2V</text>
<text x="40" y="294.5" font-family="Liberation Sans" font-size="13" fill="#c0c0c0" text-anchor="end" letter-spacing="0.3" stroke="#c0c0c0" stroke-width="0.25">-1.5V</text>
<text x="40" y="319.5" font-family="Liberation Sans" font-size="13" fill="#c0c0c0" text-anchor="end" letter-spacing="0.3" stroke="#c0c0c0" stroke-width="0.25">-1.8V</text>
<text x="40" y="344.5" font-family="Liberation Sans" font-size="13" fill="#c0c0c0" text-anchor="end" letter-spacing="0.3" stroke="#c0c0c0" stroke-width="0.25">-2.1V</text>
<text x="40" y="369.5" font-family="Liberation Sans" font-size="13" fill="#c0c0c0" text-anchor="end" letter-spacing="0.3" stroke="#c0c0c0" stroke-width="0.25">-2.4V</text>
<text x="40" y="394.5" font-family="Liberation Sans" font-size="13" fill="#c0c0c0" text-anchor="end" letter-spacing="0.3" stroke="#c0c0c0" stroke-width="0.25">-2.7V</text>
<text x="1270" y="144.5" font-family="Liberation Sans" font-size="13" fill="#c0c0c0" text-anchor="end" letter-spacing="0.3" stroke="#c0c0c0" stroke-width="0.25">300mA</text>
<text x="1270" y="165.5" font-family="Liberation Sans" font-size="13" fill="#c0c0c0" text-anchor="end" letter-spacing="0.3" stroke="#c0c0c0" stroke-width="0.25">200mA</text>
<text x="1270" y="186.5" font-family="Liberation Sans" font-size="13" fill="#c0c0c0" text-anchor="end" letter-spacing="0.3" stroke="#c0c0c0" stroke-width="0.25">100mA</text>
<text x="1270" y="207.5" font-family="Liberation Sans" font-size="13" fill="#c0c0c0" text-anchor="end" letter-spacing="0.3" stroke="#c0c0c0" stroke-width="0.25">0mA</text>
<text x="1270" y="227.5" font-family="Liberation Sans" font-size="13" fill="#c0c0c0" text-anchor="end" letter-spacing="0.3" stroke="#c0c0c0" stroke-width="0.25">-100mA</text>
<text x="1270" y="248.5" font-family="Liberation Sans" font-size="13" fill="#c0c0c0" text-anchor="end" letter-spacing="0.3" stroke="#c0c0c0" stroke-width="0.25">-200mA</text>
<text x="1270" y="269.5" font-family="Liberation Sans" font-size="13" fill="#c0c0c0" text-anchor="end" letter-spacing="0.3" stroke="#c0c0c0" stroke-width="0.25">-300mA</text>
<text x="1270" y="290.5" font-family="Liberation Sans" font-size="13" fill="#c0c0c0" text-anchor="end" letter-spacing="0.3" stroke="#c0c0c0" stroke-width="0.25">-400mA</text>
<text x="1270" y="311.5" font-family="Liberation Sans" font-size="13" fill="#c0c0c0" text-anchor="end" letter-spacing="0.3" stroke="#c0c0c0" stroke-width="0.25">-500mA</text>
<text x="1270" y="332.5" font-family="Liberation Sans" font-size="13" fill="#c0c0c0" text-anchor="end" letter-spacing="0.3" stroke="#c0c0c0" stroke-width="0.25">-600mA</text>
<text x="1270" y="352.5" font-family="Liberation Sans" font-size="13" fill="#c0c0c0" text-anchor="end" letter-spacing="0.3" stroke="#c0c0c0" stroke-width="0.25">-700mA</text>
<text x="1270" y="373.5" font-family="Liberation Sans" font-size="13" fill="#c0c0c0" text-anchor="end" letter-spacing="0.3" stroke="#c0c0c0" stroke-width="0.25">-800mA</text>
<text x="1270" y="394.5" font-family="Liberation Sans" font-size="13" fill="#c0c0c0" text-anchor="end" letter-spacing="0.3" stroke="#c0c0c0" stroke-width="0.25">-900mA</text>
<text x="49" y="411" font-family="Liberation Sans" font-size="13" fill="#c0c0c0" text-anchor="middle" letter-spacing="0.3" stroke="#c0c0c0" stroke-width="0.25">0.0s</text>
<text x="183" y="411" font-family="Liberation Sans" font-size="13" fill="#c0c0c0" text-anchor="middle" letter-spacing="0.3" stroke="#c0c0c0" stroke-width="0.25">0.3s</text>
<text x="318" y="411" font-family="Liberation Sans" font-size="13" fill="#c0c0c0" text-anchor="middle" letter-spacing="0.3" stroke="#c0c0c0" stroke-width="0.25">0.6s</text>
<text x="452" y="411" font-family="Liberation Sans" font-size="13" fill="#c0c0c0" text-anchor="middle" letter-spacing="0.3" stroke="#c0c0c0" stroke-width="0.25">0.9s</text>
<text x="586" y="411" font-family="Liberation Sans" font-size="13" fill="#c0c0c0" text-anchor="middle" letter-spacing="0.3" stroke="#c0c0c0" stroke-width="0.25">1.2s</text>
<text x="721" y="411" font-family="Liberation Sans" font-size="13" fill="#c0c0c0" text-anchor="middle" letter-spacing="0.3" stroke="#c0c0c0" stroke-width="0.25">1.5s</text>
<text x="855" y="411" font-family="Liberation Sans" font-size="13" fill="#c0c0c0" text-anchor="middle" letter-spacing="0.3" stroke="#c0c0c0" stroke-width="0.25">1.8s</text>
<text x="989" y="411" font-family="Liberation Sans" font-size="13" fill="#c0c0c0" text-anchor="middle" letter-spacing="0.3" stroke="#c0c0c0" stroke-width="0.25">2.1s</text>
<text x="1123" y="411" font-family="Liberation Sans" font-size="13" fill="#c0c0c0" text-anchor="middle" letter-spacing="0.3" stroke="#c0c0c0" stroke-width="0.25">2.4s</text>
<text x="197.5" y="135" font-family="Liberation Sans" font-size="14" fill="#0000ff" font-weight="bold" text-anchor="start" letter-spacing="-0.15" >V(N005,N006)</text>
<text x="617" y="135" font-family="Liberation Sans" font-size="14" fill="#ff0000" font-weight="bold" text-anchor="start" letter-spacing="-0.4" >I(L4)</text>
<text x="1003.5" y="135" font-family="Liberation Sans" font-size="14" fill="#00ff00" font-weight="bold" text-anchor="start" letter-spacing="-0.5" >I(D1)</text>
<rect x="2" y="422" width="1276" height="326" fill="#404040"/>
<rect x="2" y="422" width="1275" height="325" fill="#d4d0c8"/>
<rect x="3" y="423" width="1274" height="324" fill="#808080"/>
<rect x="3" y="423" width="1273" height="323" fill="#ffffff"/>
<rect x="4" y="424" width="1272" height="322" fill="#d4d0c8"/>
<rect x="6" y="426" width="1268" height="18" fill="#0a246a"/>
<g transform="translate(4,425)" shape-rendering="crispEdges"><rect x="6" y="9" width="3" height="1" fill="#0000ff"/><rect x="9" y="5" width="2" height="9" fill="#0000ff"/><rect x="11" y="5" width="1" height="2" fill="#0000ff"/><rect x="11" y="12" width="1" height="2" fill="#0000ff"/><path d="M11,6 L16,1" stroke="#0000ff" fill="none" shape-rendering="auto" stroke-width="1.2"/><path d="M11,13 L17,18.5" stroke="#0000ff" fill="none" shape-rendering="auto" stroke-width="1.2"/><rect x="13" y="15" width="3" height="2" fill="#0000ff"/><rect x="14" y="14" width="1" height="4" fill="#0000ff"/></g>
<text x="25" y="439" font-family="Liberation Sans" font-size="11" fill="#fff" font-weight="bold" text-anchor="start" letter-spacing="0.3" >блокинг бедин биф2</text>
<rect x="1222" y="428" width="16" height="14" fill="#404040"/>
<rect x="1222" y="428" width="15" height="13" fill="#ffffff"/>
<rect x="1223" y="429" width="14" height="12" fill="#808080"/>
<rect x="1223" y="429" width="13" height="11" fill="#d4d0c8"/>
<rect x="1238" y="428" width="16" height="14" fill="#404040"/>
<rect x="1238" y="428" width="15" height="13" fill="#ffffff"/>
<rect x="1239" y="429" width="14" height="12" fill="#808080"/>
<rect x="1239" y="429" width="13" height="11" fill="#d4d0c8"/>
<rect x="1256" y="428" width="16" height="14" fill="#404040"/>
<rect x="1256" y="428" width="15" height="13" fill="#ffffff"/>
<rect x="1257" y="429" width="14" height="12" fill="#808080"/>
<rect x="1257" y="429" width="13" height="11" fill="#d4d0c8"/>
<rect x="1226" y="437" width="6" height="2" fill="#000"/>
<rect x="1241.5" y="430.5" width="8" height="8" fill="none" stroke="#000"/>
<rect x="1241" y="430" width="9" height="2" fill="#000"/>
<path d="M1260,431 L1267,438 M1267,431 L1260,438" stroke="#000" stroke-width="1.5" fill="none"/>
<rect x="6" y="445" width="1268" height="299" fill="#ffffff"/>
<rect x="6" y="445" width="1267" height="298" fill="#808080"/>
<rect x="7" y="446" width="1266" height="297" fill="#d4d0c8"/>
<rect x="7" y="446" width="1265" height="296" fill="#404040"/>
<rect x="8" y="447" width="1264" height="295" fill="#c0c0c0"/>
<path d="M478,516.5 L493.3,516.5 L498.5,506.7 L508.9,526.2 L517.4,506.7 L527.8,526.2 L533,516.5 L537.5,516.5 M646.5,660.2 L656.7,665.4 L636.3,674.7 L656.7,684.3 L636.3,694.2 L646.5,699.5 L646.5,704 M408,514.5 L429,514.5 M408,518.5 L429,518.5 M418.5,496 L418.5,514.5 M418.5,518.5 L418.5,537 M438,682.5 L459,682.5 M438,687.5 L459,687.5 M448.5,666 L448.5,682.5 M448.5,687.5 L448.5,704 M706,642.5 L726,642.5 M706,647.5 L726,647.5 M716.5,625 L716.5,642.5 M716.5,647.5 L716.5,664 M693.5,546 L693.5,567 M698.5,546 L698.5,567 M677,556.5 L693.5,556.5 M698.5,556.5 L716,556.5 M557.5,568.5 L577.5,568.5 L567.5,582.5 L557.5,568.5 M557.5,578 L557.5,582.5 L577.5,582.5 L577.5,588.5 L574,588.5 M567.5,556 L567.5,568.5 M567.5,582.5 L567.5,595 M599.5,615 L599.5,635.5 L614.5,625.5 L599.5,615 M620,619 L620,615 L614.5,615 L614.5,635.5 L609.5,635.5 L609.5,631 M588,625.5 L599.5,625.5 M614.5,625.5 L626,625.5 M785.5,613.5 L805.5,613.5 L795.5,598.5 L785.5,613.5 M788,593.5 L785.5,593.5 L785.5,598.5 L805.5,598.5 L805.5,603.5 L802,603.5 M795.5,586 L795.5,598.5 M795.5,613.5 L795.5,625 M478.5,635 L478.5,675 M469,655.5 L478.5,655.5 M479,644.6 L508.3,625.8 M478.5,666 L508.4,684.5 M495.6,672.3 L490.4,677.8 L508.3,684.3 L495.6,672.3 M795.5,655 L795.5,667.5 M780,667.5 L816,667.5 M775,682.5 L816.5,682.5 M785.5,657 L785.5,662 M781,660 L789,660 M795.5,692.5 L795.5,704 M785.5,672.5 H805.5 V677.5 H785.5 Z M785.5,687.5 H805.5 V692.5 H785.5 Z" fill="none" stroke="#000080" stroke-width="1.1"/>
<g transform="matrix(1,0,0,1,607.5,556)"><path d="M0,0 V-4 C0,-8 2.5,-10 6,-10 H12.5 C14.5,-10 15.5,-9 16.5,-7 C18,-5 19.5,0 19,3 C18.5,6 17.5,7 16.5,7 C15.5,7 14.5,6 14,3 C13.5,0 15,-5 16.5,-7 C17.5,-9 18.5,-10 20.5,-10 H27.5 C29.5,-10 30.5,-9 31.5,-7 C33,-5 34.5,0 34,3 C33.5,6 32.5,7 31.5,7 C30.5,7 29.5,6 29,3 C28.5,0 30,-5 31.5,-7 C32.5,-9 33.5,-10 35.5,-10 H43 C46.5,-10 49,-8 49,-4 V0" fill="none" stroke="#000080" stroke-width="1.1"/><circle cx="41" cy="4.4" r="2.1" fill="none" stroke="#000080" stroke-width="1"/></g>
<g transform="matrix(0,-1,1,0,537.5,615.5)"><path d="M0,0 V-4 C0,-8 2.5,-10 6,-10 H12.5 C14.5,-10 15.5,-9 16.5,-7 C18,-5 19.5,0 19,3 C18.5,6 17.5,7 16.5,7 C15.5,7 14.5,6 14,3 C13.5,0 15,-5 16.5,-7 C17.5,-9 18.5,-10 20.5,-10 H27.5 C29.5,-10 30.5,-9 31.5,-7 C33,-5 34.5,0 34,3 C33.5,6 32.5,7 31.5,7 C30.5,7 29.5,6 29,3 C28.5,0 30,-5 31.5,-7 C32.5,-9 33.5,-10 35.5,-10 H43 C46.5,-10 49,-8 49,-4 V0" fill="none" stroke="#000080" stroke-width="1.1"/><circle cx="41" cy="4.4" r="2.1" fill="none" stroke="#000080" stroke-width="1"/></g>
<g transform="matrix(0,-1,1,0,448,616)"><path d="M0,0 V-4 C0,-8 2.5,-10 6,-10 H12.5 C14.5,-10 15.5,-9 16.5,-7 C18,-5 19.5,0 19,3 C18.5,6 17.5,7 16.5,7 C15.5,7 14.5,6 14,3 C13.5,0 15,-5 16.5,-7 C17.5,-9 18.5,-10 20.5,-10 H27.5 C29.5,-10 30.5,-9 31.5,-7 C33,-5 34.5,0 34,3 C33.5,6 32.5,7 31.5,7 C30.5,7 29.5,6 29,3 C28.5,0 30,-5 31.5,-7 C32.5,-9 33.5,-10 35.5,-10 H43 C46.5,-10 49,-8 49,-4 V0" fill="none" stroke="#000080" stroke-width="1.1"/><circle cx="41" cy="4.4" r="2.1" fill="none" stroke="#000080" stroke-width="1"/></g>
<g transform="matrix(0,1,-1,0,448.5,496)"><path d="M0,0 V-4 C0,-8 2.5,-10 6,-10 H12.5 C14.5,-10 15.5,-9 16.5,-7 C18,-5 19.5,0 19,3 C18.5,6 17.5,7 16.5,7 C15.5,7 14.5,6 14,3 C13.5,0 15,-5 16.5,-7 C17.5,-9 18.5,-10 20.5,-10 H27.5 C29.5,-10 30.5,-9 31.5,-7 C33,-5 34.5,0 34,3 C33.5,6 32.5,7 31.5,7 C30.5,7 29.5,6 29,3 C28.5,0 30,-5 31.5,-7 C32.5,-9 33.5,-10 35.5,-10 H43 C46.5,-10 49,-8 49,-4 V0" fill="none" stroke="#000080" stroke-width="1.1"/><circle cx="41" cy="4.4" r="2.1" fill="none" stroke="#000080" stroke-width="1"/></g>
<text x="537.6" y="466" font-family="Liberation Sans" font-size="14" fill="#000" font-weight="bold" text-anchor="start" stroke="#000" stroke-width="0.35">.tran 2.6 startup uic</text>
<text x="537.6" y="481" font-family="Liberation Sans" font-size="14" fill="#000" font-weight="bold" text-anchor="start" stroke="#000" stroke-width="0.35">K1 L1 L2 L3 &#160;0.99</text>
<text x="423.6" y="505" font-family="Liberation Sans" font-size="14" fill="#000" font-weight="bold" text-anchor="start" stroke="#000" stroke-width="0.35">C3</text>
<text x="460.7" y="515" font-family="Liberation Sans" font-size="14" fill="#000" font-weight="bold" text-anchor="start" stroke="#000" stroke-width="0.35">L3</text>
<text x="423.8" y="541" font-family="Liberation Sans" font-size="14" fill="#000" font-weight="bold" text-anchor="start" stroke="#000" stroke-width="0.35">16000p</text>
<text x="460" y="541" font-family="Liberation Sans" font-size="14" fill="#000" font-weight="bold" text-anchor="start" stroke="#000" stroke-width="0.35">0.016</text>
<text x="503.7" y="503" font-family="Liberation Sans" font-size="14" fill="#000" font-weight="bold" text-anchor="start" stroke="#000" stroke-width="0.35">R1</text>
<text x="503.7" y="538" font-family="Liberation Sans" font-size="14" fill="#000" font-weight="bold" text-anchor="start" stroke="#000" stroke-width="0.35">3k</text>
<text x="421" y="580" font-family="Liberation Sans" font-size="14" fill="#000" font-weight="bold" text-anchor="start" stroke="#000" stroke-width="0.35">L1</text>
<text x="408" y="604" font-family="Liberation Sans" font-size="14" fill="#000" font-weight="bold" text-anchor="start" stroke="#000" stroke-width="0.35">0.02</text>
<text x="510" y="580" font-family="Liberation Sans" font-size="14" fill="#000" font-weight="bold" text-anchor="start" stroke="#000" stroke-width="0.35">L2</text>
<text x="505" y="604" font-family="Liberation Sans" font-size="14" fill="#000" font-weight="bold" text-anchor="start" stroke="#000" stroke-width="0.35">0.4</text>
<text x="504" y="650" font-family="Liberation Sans" font-size="14" fill="#000" font-weight="bold" text-anchor="start" stroke="#000" stroke-width="0.35">Q1</text>
<text x="503" y="672" font-family="Liberation Sans" font-size="14" fill="#000" font-weight="bold" text-anchor="start" stroke="#000" stroke-width="0.35">2N3055</text>
<text x="453.6" y="675" font-family="Liberation Sans" font-size="14" fill="#000" font-weight="bold" text-anchor="start" stroke="#000" stroke-width="0.35">C2</text>
<text x="453" y="708" font-family="Liberation Sans" font-size="14" fill="#000" font-weight="bold" text-anchor="start" stroke="#000" stroke-width="0.35">900000pF</text>
<text x="573" y="561" font-family="Liberation Sans" font-size="14" fill="#000" font-weight="bold" text-anchor="start" stroke="#000" stroke-width="0.35">D3</text>
<text x="573" y="605" font-family="Liberation Sans" font-size="14" fill="#000" font-weight="bold" text-anchor="start" stroke="#000" stroke-width="0.35">MBRS360</text>
<text x="623.75" y="542" font-family="Liberation Sans" font-size="14" fill="#000" font-weight="bold" text-anchor="start" stroke="#000" stroke-width="0.35">L4</text>
<text x="621" y="576" font-family="Liberation Sans" font-size="14" fill="#000" font-weight="bold" text-anchor="start" stroke="#000" stroke-width="0.35">0.4</text>
<text x="598.4" y="612" font-family="Liberation Sans" font-size="14" fill="#000" font-weight="bold" text-anchor="start" stroke="#000" stroke-width="0.35">D2</text>
<text x="575" y="647" font-family="Liberation Sans" font-size="14" fill="#000" font-weight="bold" text-anchor="start" stroke="#000" stroke-width="0.35">MBRS360</text>
<text x="659.6" y="674" font-family="Liberation Sans" font-size="14" fill="#000" font-weight="bold" text-anchor="start" stroke="#000" stroke-width="0.35">R2</text>
<text x="659" y="696" font-family="Liberation Sans" font-size="14" fill="#000" font-weight="bold" text-anchor="start" stroke="#000" stroke-width="0.35">9000k</text>
<text x="687.5" y="542" font-family="Liberation Sans" font-size="14" fill="#000" font-weight="bold" text-anchor="start" stroke="#000" stroke-width="0.35">C1</text>
<text x="685.9" y="578" font-family="Liberation Sans" font-size="14" fill="#000" font-weight="bold" text-anchor="start" stroke="#000" stroke-width="0.35">0.5</text>
<text x="772.7" y="585" font-family="Liberation Sans" font-size="14" fill="#000" font-weight="bold" text-anchor="start" stroke="#000" stroke-width="0.35">D1</text>
<text x="724.8" y="630" font-family="Liberation Sans" font-size="14" fill="#000" font-weight="bold" text-anchor="start" stroke="#000" stroke-width="0.35">MBRS360</text>
<text x="721" y="635" font-family="Liberation Sans" font-size="14" fill="#000" font-weight="bold" text-anchor="start" stroke="#000" stroke-width="0.35">C4</text>
<text x="720" y="669" font-family="Liberation Sans" font-size="14" fill="#000" font-weight="bold" text-anchor="start" stroke="#000" stroke-width="0.35">0.0000005</text>
<text x="810.2" y="660" font-family="Liberation Sans" font-size="14" fill="#000" font-weight="bold" text-anchor="start" stroke="#000" stroke-width="0.35">V3</text>
<text x="819" y="671" font-family="Liberation Sans" font-size="14" fill="#000" font-weight="bold" text-anchor="start" stroke="#000" stroke-width="0.35">13.5</text>
<text x="815.6" y="689" font-family="Liberation Sans" font-size="14" fill="#000" font-weight="bold" text-anchor="start" stroke="#000" stroke-width="0.35">Rser=0.01</text>
<path d="M389.5,496.5 L451,496.5 M389.5,496.5 L389.5,655.5 L469,655.5 M418.5,537 L418.5,625.5 L478.5,625.5 L478.5,516.5 L488,516.5 M537.5,516.5 L795.5,516.5 L795.5,586 M537.5,516.5 L537.5,566 M448.5,546 L448.5,566 M448.5,616 L448.5,666 M448.5,704.5 L795.5,704.5 L795.5,692.5 M508.3,625.5 L588,625.5 M626,625.5 L735.5,625.5 L735.5,556.5 L716,556.5 M537.5,615.5 L537.5,625.5 M567.5,556.5 L607.5,556.5 M567.5,595 L567.5,625.5 M656.5,556.5 L677,556.5 M646.5,625.5 L646.5,660.2 M716.5,664 L716.5,704.5 M775,625.5 L795.5,625.5 L795.5,655 M508.5,684.5 L508.5,704.5 M547.5,704.5 L547.5,724.5 M536.5,724.5 H558.5 L547.5,735.5 Z" fill="none" stroke="#0000ff" stroke-width="1.2"/>
<rect x="416.0" y="494.0" width="5" height="5" fill="#0000ff"/>
<rect x="535.0" y="514.0" width="5" height="5" fill="#0000ff"/>
<rect x="446.0" y="623.0" width="5" height="5" fill="#0000ff"/>
<rect x="535.0" y="623.0" width="5" height="5" fill="#0000ff"/>
<rect x="565.0" y="623.0" width="5" height="5" fill="#0000ff"/>
<rect x="644.0" y="623.0" width="5" height="5" fill="#0000ff"/>
<rect x="714.0" y="623.0" width="5" height="5" fill="#0000ff"/>
<rect x="793.0" y="623.0" width="5" height="5" fill="#0000ff"/>
<rect x="506.0" y="702.0" width="5" height="5" fill="#0000ff"/>
<rect x="545.0" y="702.0" width="5" height="5" fill="#0000ff"/>
<rect x="644.0" y="702.0" width="5" height="5" fill="#0000ff"/>
<rect x="714.0" y="702.0" width="5" height="5" fill="#0000ff"/></svg></body></html>
